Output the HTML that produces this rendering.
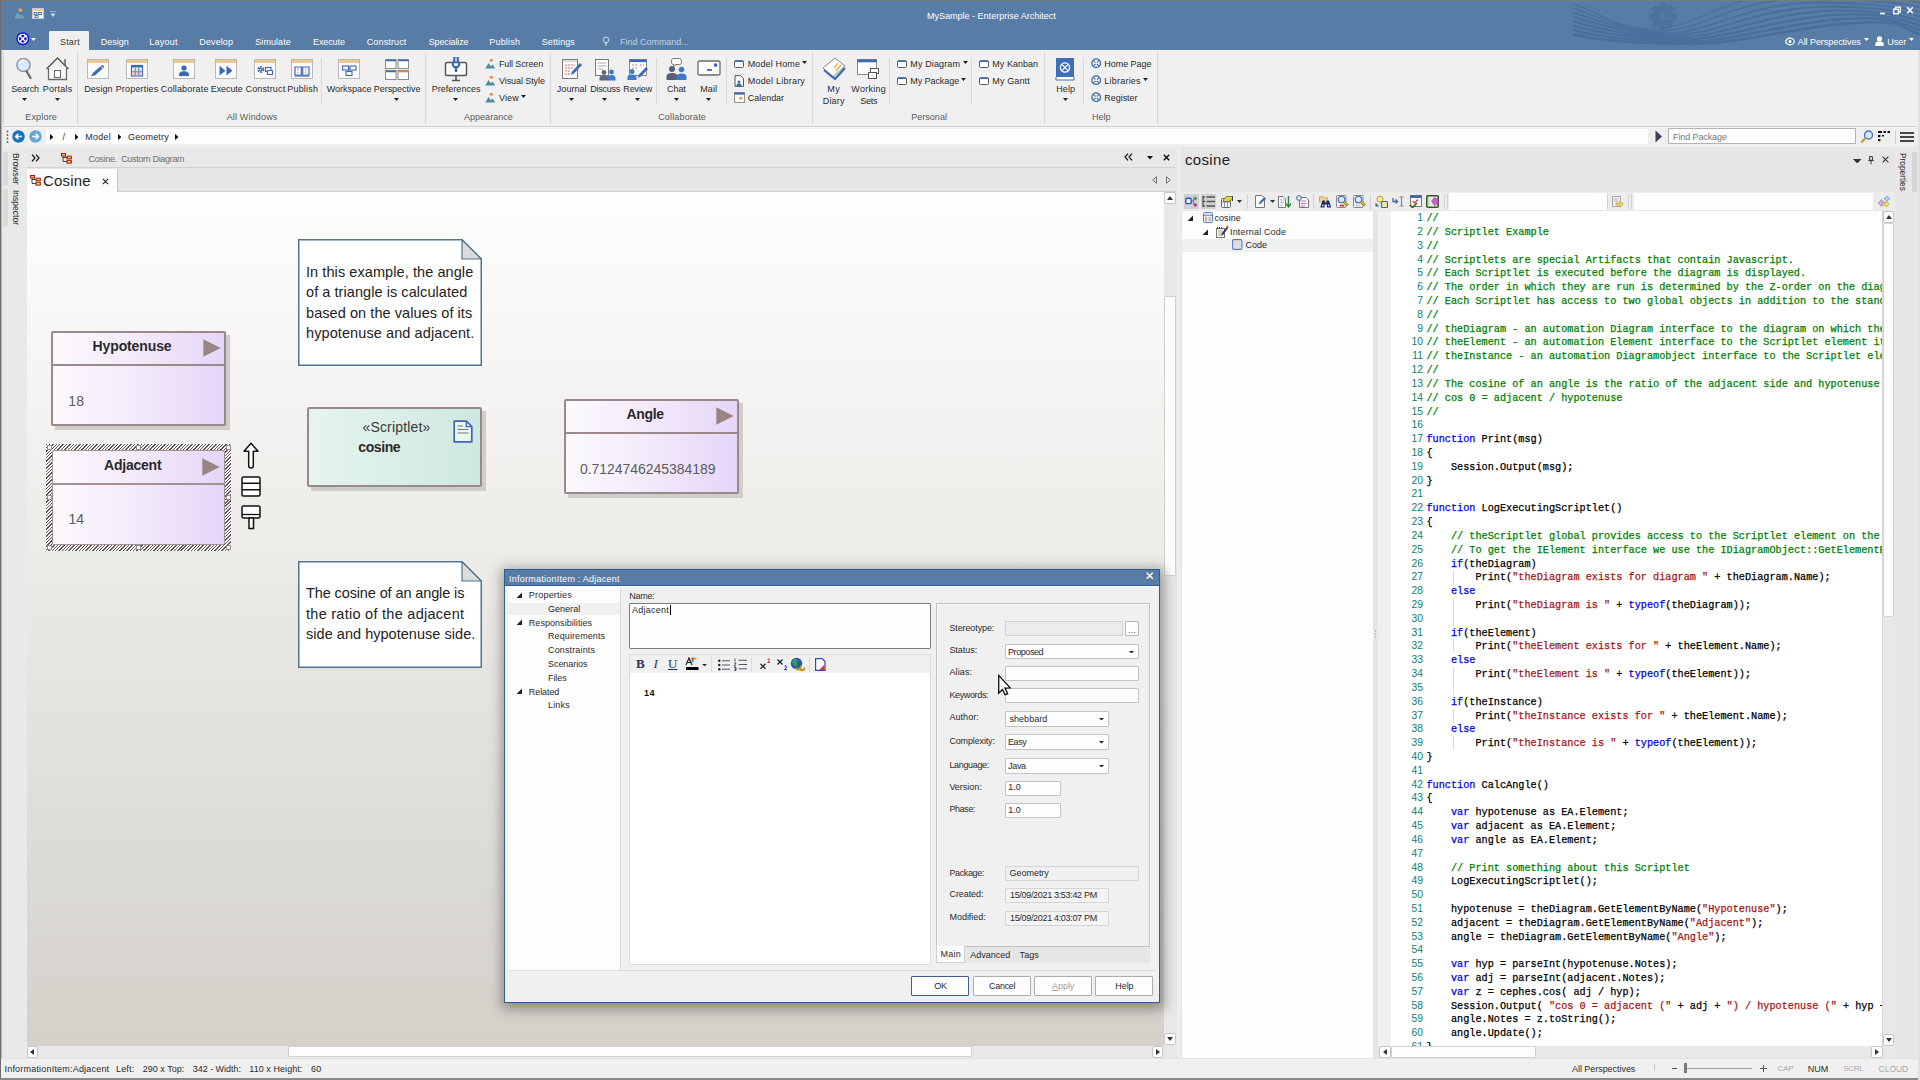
<!DOCTYPE html>
<html lang="en"><head><meta charset="utf-8"><title>MySample - Enterprise Architect</title><style>
html,body{margin:0;padding:0;}
body{width:1920px;height:1080px;position:relative;overflow:hidden;background:#f0f0f0;font-family:"Liberation Sans",sans-serif;font-size:9px;color:#2b2b2b;}
.a{position:absolute;display:block;}
.t{white-space:pre;}
.cd{font-family:"Liberation Mono",monospace;font-size:10.21px;line-height:14px;white-space:pre;color:#000;-webkit-text-stroke:0.25px;}
.ln{font-family:"Liberation Sans",sans-serif;font-size:10.3px;line-height:14px;color:#0a7f72;white-space:pre;}
.cm{color:#008000;}.kw{color:#0000e6;}.st{color:#a31515;}
</style></head>
<body>
<!-- p1_top -->
<div class="a" style="left:0px;top:0px;width:1920px;height:1080px;background:#f0f0f0;"></div>
<div class="a" style="left:0px;top:0px;width:1920px;height:50px;background:#577ca6;"></div>
<svg class="a" style="left:1572px;top:1px;overflow:hidden;" width="348" height="49" viewBox="0 0 348 49"><g transform="translate(91,15.500)" fill="#4b709d" opacity="0.8"><circle r="10.500"/><rect x="-3" y="-13.500" width="6" height="6" rx="1" transform="rotate(0)"/><rect x="-3" y="-13.500" width="6" height="6" rx="1" transform="rotate(45)"/><rect x="-3" y="-13.500" width="6" height="6" rx="1" transform="rotate(90)"/><rect x="-3" y="-13.500" width="6" height="6" rx="1" transform="rotate(135)"/><rect x="-3" y="-13.500" width="6" height="6" rx="1" transform="rotate(180)"/><rect x="-3" y="-13.500" width="6" height="6" rx="1" transform="rotate(225)"/><rect x="-3" y="-13.500" width="6" height="6" rx="1" transform="rotate(270)"/><rect x="-3" y="-13.500" width="6" height="6" rx="1" transform="rotate(315)"/></g><circle cx="93" cy="14.500" r="5.500" fill="#52789f"/><circle cx="95" cy="13.500" r="2.800" fill="#4b709d"/><path d="M1 3.0 C 30 12.0, 45.0 28.0, 80.0 28.0 C 125.0 28.0, 145.0 -4.0, 215.0 -6.0 C 250.0 -7.0, 330 -4.0, 348 2.0" fill="none" stroke="#486c99" stroke-width="1.20" opacity="0.85"/><path d="M1 7.3 C 30 16.3, 51.5 30.1, 86.5 30.1 C 131.5 30.1, 157.0 -0.1, 227.0 -2.1 C 262.0 -3.1, 330 0.5, 348 6.5" fill="none" stroke="#486c99" stroke-width="1.40" opacity="0.85"/><path d="M1 11.6 C 30 20.6, 58.0 32.2, 93.0 32.2 C 138.0 32.2, 169.0 3.8, 239.0 1.8 C 274.0 0.8, 330 5.0, 348 11.0" fill="none" stroke="#486c99" stroke-width="1.60" opacity="0.85"/><path d="M1 15.9 C 30 24.9, 64.5 34.3, 99.5 34.3 C 144.5 34.3, 181.0 7.7, 251.0 5.7 C 286.0 4.7, 330 9.5, 348 15.5" fill="none" stroke="#486c99" stroke-width="1.80" opacity="0.85"/><path d="M1 20.2 C 30 29.2, 71.0 36.4, 106.0 36.4 C 151.0 36.4, 193.0 11.6, 263.0 9.6 C 298.0 8.6, 330 14.0, 348 20.0" fill="none" stroke="#486c99" stroke-width="2.00" opacity="0.85"/><path d="M1 24.5 C 30 33.5, 77.5 38.5, 112.5 38.5 C 157.5 38.5, 205.0 15.5, 275.0 13.5 C 310.0 12.5, 330 18.5, 348 24.5" fill="none" stroke="#486c99" stroke-width="2.20" opacity="0.85"/><path d="M1 28.8 C 30 37.8, 84.0 40.6, 119.0 40.6 C 164.0 40.6, 217.0 19.4, 287.0 17.4 C 322.0 16.4, 330 23.0, 348 29.0" fill="none" stroke="#486c99" stroke-width="2.40" opacity="0.85"/><path d="M1 33.1 C 30 42.1, 90.5 42.7, 125.5 42.7 C 170.5 42.7, 229.0 23.3, 299.0 21.3 C 334.0 20.3, 330 27.5, 348 33.5" fill="none" stroke="#486c99" stroke-width="2.60" opacity="0.85"/></svg>
<div class="a" style="left:0px;top:0px;width:1920px;height:1px;background:#7c7a78;"></div>
<div class="a" style="left:0px;top:0px;width:1px;height:1080px;background:#6f6f6f;"></div>
<div class="a" style="left:1px;top:50px;width:1px;height:1030px;background:#b4b4b4;"></div>
<div class="a" style="left:2px;top:50px;width:1px;height:1030px;background:#e6e6e6;"></div>
<svg class="a" style="left:14px;top:6px;" width="12" height="13" viewBox="0 0 12 13"><path d="M0 12.500L3.800 6.500L6.200 10L7.800 8L10.500 12.500Z" fill="#6ba6b2"/><circle cx="6.400" cy="4.200" r="1.900" fill="#f3934a"/></svg>
<svg class="a" style="left:32px;top:8px;" width="12" height="11" viewBox="0 0 12 11"><rect x="0.5" y="0.5" width="11" height="10" fill="#f4f4f4" stroke="#c9c9c9"/><rect x="1" y="1" width="10" height="2" fill="#e9c98d"/><rect x="2" y="4.5" width="3" height="2" fill="none" stroke="#3a62b0" stroke-width=".8"/><rect x="6.5" y="4.5" width="3" height="2" fill="none" stroke="#3a62b0" stroke-width=".8"/><rect x="3" y="7.5" width="3" height="2" fill="none" stroke="#3a62b0" stroke-width=".8"/></svg>
<svg class="a" style="left:50px;top:11px;" width="6" height="7" viewBox="0 0 6 7"><path d="M0 0H6" stroke="#d5dde8" stroke-width="1"/><path d="M0.5 2.5H5.5L3 6Z" fill="#d5dde8"/></svg>
<span class="a t" id="t1" style="top:9.00px;font-size:9px;line-height:14px;color:#ffffff;left:927px;letter-spacing:0.008px;">MySample - Enterprise Architect</span>
<svg class="a" style="left:1879px;top:6px;" width="36" height="10" viewBox="0 0 36 10"><path d="M1 7.5H6" stroke="#fff" stroke-width="1.6"/><rect x="14.7" y="3.2" width="4.6" height="4.6" fill="none" stroke="#fff" stroke-width="1.3"/><path d="M16.5 3V1.2H21.3V6H19.5" fill="none" stroke="#fff" stroke-width="1.3"/><path d="M28.2 1.2L33.8 7.2M33.8 1.2L28.2 7.2" stroke="#fff" stroke-width="1.5"/></svg>
<svg class="a" style="left:15.5px;top:32px;" width="13.5" height="13.5" viewBox="0 0 13.5 13.5"><circle cx="6.750" cy="6.750" r="6.500" fill="#1212e6"/><circle cx="6.750" cy="6.750" r="4.300" fill="#1212e6" stroke="#fff" stroke-width="1.400"/><path d="M3.300 3.300L10.200 10.200M10.200 3.300L3.300 10.200" stroke="#fff" stroke-width="1.500"/><circle cx="6.750" cy="3.900" r="1.150" fill="#1212e6"/><circle cx="6.750" cy="9.600" r="1.150" fill="#1212e6"/><circle cx="3.900" cy="6.750" r="1.150" fill="#1212e6"/><circle cx="9.600" cy="6.750" r="1.150" fill="#1212e6"/></svg>
<svg class="a" style="left:31px;top:37.5px;" width="5" height="3" viewBox="0 0 5 3"><path d="M0 0H5L2.5 3Z" fill="#f0f4fa"/></svg>
<div class="a" style="left:49px;top:31px;width:40px;height:20px;background:#f0f0f0;border-radius:1px 1px 0 0;"></div>
<span class="a t" id="t2" style="top:34.80px;font-size:9px;line-height:14px;color:#3a3a3a;left:60px;letter-spacing:0.159px;">Start</span>
<span class="a t" id="t3" style="top:34.80px;font-size:9px;line-height:14px;color:#ffffff;left:100.7px;letter-spacing:0.016px;">Design</span>
<span class="a t" id="t4" style="top:34.80px;font-size:9px;line-height:14px;color:#ffffff;left:149.3px;letter-spacing:0.246px;">Layout</span>
<span class="a t" id="t5" style="top:34.80px;font-size:9px;line-height:14px;color:#ffffff;left:199.3px;letter-spacing:0.111px;">Develop</span>
<span class="a t" id="t6" style="top:34.80px;font-size:9px;line-height:14px;color:#ffffff;left:255.3px;letter-spacing:0.062px;">Simulate</span>
<span class="a t" id="t7" style="top:34.80px;font-size:9px;line-height:14px;color:#ffffff;left:313px;letter-spacing:-0.103px;">Execute</span>
<span class="a t" id="t8" style="top:34.80px;font-size:9px;line-height:14px;color:#ffffff;left:366.7px;letter-spacing:0.144px;">Construct</span>
<span class="a t" id="t9" style="top:34.80px;font-size:9px;line-height:14px;color:#ffffff;left:428.7px;letter-spacing:-0.122px;">Specialize</span>
<span class="a t" id="t10" style="top:34.80px;font-size:9px;line-height:14px;color:#ffffff;left:489.3px;letter-spacing:0.183px;">Publish</span>
<span class="a t" id="t11" style="top:34.80px;font-size:9px;line-height:14px;color:#ffffff;left:541.8px;letter-spacing:0.072px;">Settings</span>
<svg class="a" style="left:602px;top:36px;" width="8" height="11" viewBox="0 0 8 11"><circle cx="4" cy="3.8" r="2.8" fill="none" stroke="#d0dae8" stroke-width="1"/><path d="M2.8 7.5H5.2M3 9.2H5" stroke="#d0dae8" stroke-width="1"/></svg>
<span class="a t" id="t12" style="top:34.80px;font-size:9px;line-height:14px;color:#c3d0e2;left:620px;letter-spacing:-0.015px;">Find Command...</span>
<svg class="a" style="left:1785px;top:37px;" width="10" height="9" viewBox="0 0 10 9"><ellipse cx="5" cy="4.5" rx="4.3" ry="3.3" fill="none" stroke="#fff" stroke-width="1.2"/><circle cx="5" cy="4.5" r="1.5" fill="#fff"/></svg>
<span class="a t" id="t13" style="top:34.80px;font-size:9px;line-height:14px;color:#ffffff;left:1797.7px;letter-spacing:-0.058px;">All Perspectives</span>
<svg class="a" style="left:1864px;top:38px;" width="5" height="3" viewBox="0 0 5 3"><path d="M0 0H5L2.5 3Z" fill="#fff"/></svg>
<svg class="a" style="left:1875px;top:36px;" width="9" height="10" viewBox="0 0 9 10"><circle cx="4.5" cy="2.8" r="2.6" fill="#fff"/><path d="M0.3 10V8C0.3 6 2 5.2 4.5 5.2S8.7 6 8.7 8V10Z" fill="#fff"/></svg>
<span class="a t" id="t14" style="top:34.80px;font-size:9px;line-height:14px;color:#ffffff;left:1887.3px;letter-spacing:-0.051px;">User</span>
<svg class="a" style="left:1909px;top:38px;" width="5" height="3" viewBox="0 0 5 3"><path d="M0 0H5L2.5 3Z" fill="#fff"/></svg>
<!-- p2_ribbon -->
<div class="a" style="left:3px;top:50px;width:1914px;height:76px;background:#f0f0f0;"></div>
<div class="a" style="left:3px;top:126px;width:1914px;height:1px;background:#d0d0d0;"></div>
<div class="a" style="left:3px;top:127px;width:1914px;height:1px;background:#f4f4f4;"></div>
<div class="a" style="left:77px;top:53px;width:1px;height:70px;background:#d4d4d4;"></div>
<div class="a" style="left:425px;top:53px;width:1px;height:70px;background:#d4d4d4;"></div>
<div class="a" style="left:550px;top:53px;width:1px;height:70px;background:#d4d4d4;"></div>
<div class="a" style="left:812px;top:53px;width:1px;height:70px;background:#d4d4d4;"></div>
<div class="a" style="left:1044px;top:53px;width:1px;height:70px;background:#d4d4d4;"></div>
<div class="a" style="left:1157px;top:53px;width:1px;height:70px;background:#d4d4d4;"></div>
<div class="a" style="left:3px;top:52px;width:1px;height:72px;background:#d4d4d4;"></div>
<div class="a" style="left:321px;top:58px;width:1px;height:47px;background:#d9d9d9;"></div>
<div class="a" style="left:656px;top:58px;width:1px;height:47px;background:#d9d9d9;"></div>
<div class="a" style="left:726px;top:58px;width:1px;height:47px;background:#d9d9d9;"></div>
<div class="a" style="left:889px;top:58px;width:1px;height:47px;background:#d9d9d9;"></div>
<div class="a" style="left:971px;top:58px;width:1px;height:47px;background:#d9d9d9;"></div>
<div class="a" style="left:1083px;top:58px;width:1px;height:47px;background:#d9d9d9;"></div>
<span class="a t" id="t15" style="top:109.70px;font-size:9px;line-height:14px;color:#5a5a5a;left:25.200000000000003px;letter-spacing:0.185px;">Explore</span>
<span class="a t" id="t16" style="top:109.70px;font-size:9px;line-height:14px;color:#5a5a5a;left:226.7px;letter-spacing:0.163px;">All Windows</span>
<span class="a t" id="t17" style="top:109.70px;font-size:9px;line-height:14px;color:#5a5a5a;left:464.0px;letter-spacing:0.026px;">Appearance</span>
<span class="a t" id="t18" style="top:109.70px;font-size:9px;line-height:14px;color:#5a5a5a;left:658.2px;letter-spacing:0.162px;">Collaborate</span>
<span class="a t" id="t19" style="top:109.70px;font-size:9px;line-height:14px;color:#5a5a5a;left:911.2px;letter-spacing:0.035px;">Personal</span>
<span class="a t" id="t20" style="top:109.70px;font-size:9px;line-height:14px;color:#5a5a5a;left:1091.9px;letter-spacing:0.074px;">Help</span>
<span class="a t" id="t21" style="top:82.00px;font-size:9px;line-height:14px;color:#2b2b2b;left:11.2px;letter-spacing:-0.120px;">Search</span>
<svg class="a" style="left:22px;top:98px;" width="5" height="3" viewBox="0 0 5 3"><path d="M0 0H5L2.5 3Z" fill="#222"/></svg>
<span class="a t" id="t22" style="top:82.00px;font-size:9px;line-height:14px;color:#2b2b2b;left:42.8px;letter-spacing:0.256px;">Portals</span>
<svg class="a" style="left:55px;top:98px;" width="5" height="3" viewBox="0 0 5 3"><path d="M0 0H5L2.5 3Z" fill="#222"/></svg>
<span class="a t" id="t23" style="top:82.00px;font-size:9px;line-height:14px;color:#2b2b2b;left:84.25px;letter-spacing:0.049px;">Design</span>
<span class="a t" id="t24" style="top:82.00px;font-size:9px;line-height:14px;color:#2b2b2b;left:115.69999999999999px;letter-spacing:0.178px;">Properties</span>
<span class="a t" id="t25" style="top:82.00px;font-size:9px;line-height:14px;color:#2b2b2b;left:160.8px;letter-spacing:0.162px;">Collaborate</span>
<span class="a t" id="t26" style="top:82.00px;font-size:9px;line-height:14px;color:#2b2b2b;left:210.8px;letter-spacing:-0.103px;">Execute</span>
<span class="a t" id="t27" style="top:82.00px;font-size:9px;line-height:14px;color:#2b2b2b;left:245.5px;letter-spacing:0.144px;">Construct</span>
<span class="a t" id="t28" style="top:82.00px;font-size:9px;line-height:14px;color:#2b2b2b;left:287.3px;letter-spacing:0.183px;">Publish</span>
<span class="a t" id="t29" style="top:82.00px;font-size:9px;line-height:14px;color:#2b2b2b;left:326.7px;letter-spacing:-0.005px;">Workspace</span>
<span class="a t" id="t30" style="top:82.00px;font-size:9px;line-height:14px;color:#2b2b2b;left:373.7px;letter-spacing:-0.020px;">Perspective</span>
<svg class="a" style="left:394px;top:98px;" width="5" height="3" viewBox="0 0 5 3"><path d="M0 0H5L2.5 3Z" fill="#222"/></svg>
<span class="a t" id="t31" style="top:82.00px;font-size:9px;line-height:14px;color:#2b2b2b;left:431.7px;letter-spacing:0.025px;">Preferences</span>
<svg class="a" style="left:453px;top:98px;" width="5" height="3" viewBox="0 0 5 3"><path d="M0 0H5L2.5 3Z" fill="#222"/></svg>
<span class="a t" id="t32" style="top:82.00px;font-size:9px;line-height:14px;color:#2b2b2b;left:556.8px;letter-spacing:0.040px;">Journal</span>
<svg class="a" style="left:569px;top:98px;" width="5" height="3" viewBox="0 0 5 3"><path d="M0 0H5L2.5 3Z" fill="#222"/></svg>
<span class="a t" id="t33" style="top:82.00px;font-size:9px;line-height:14px;color:#2b2b2b;left:590.2px;letter-spacing:-0.244px;">Discuss</span>
<svg class="a" style="left:602px;top:98px;" width="5" height="3" viewBox="0 0 5 3"><path d="M0 0H5L2.5 3Z" fill="#222"/></svg>
<span class="a t" id="t34" style="top:82.00px;font-size:9px;line-height:14px;color:#2b2b2b;left:623.3px;letter-spacing:-0.118px;">Review</span>
<svg class="a" style="left:635px;top:98px;" width="5" height="3" viewBox="0 0 5 3"><path d="M0 0H5L2.5 3Z" fill="#222"/></svg>
<span class="a t" id="t35" style="top:82.00px;font-size:9px;line-height:14px;color:#2b2b2b;left:667.0px;letter-spacing:-0.051px;">Chat</span>
<svg class="a" style="left:674px;top:98px;" width="5" height="3" viewBox="0 0 5 3"><path d="M0 0H5L2.5 3Z" fill="#222"/></svg>
<span class="a t" id="t36" style="top:82.00px;font-size:9px;line-height:14px;color:#2b2b2b;left:700.3px;letter-spacing:0.074px;">Mail</span>
<svg class="a" style="left:706px;top:98px;" width="5" height="3" viewBox="0 0 5 3"><path d="M0 0H5L2.5 3Z" fill="#222"/></svg>
<span class="a t" id="t37" style="top:82.00px;font-size:9px;line-height:14px;color:#2b2b2b;left:1056.3px;letter-spacing:0.074px;">Help</span>
<svg class="a" style="left:1063px;top:98px;" width="5" height="3" viewBox="0 0 5 3"><path d="M0 0H5L2.5 3Z" fill="#222"/></svg>
<span class="a t" id="t38" style="top:82.00px;font-size:9px;line-height:14px;color:#2b2b2b;left:824.3px;letter-spacing:0.405px;margin-left:3px;">My</span>
<span class="a t" id="t39" style="top:93.90px;font-size:9px;line-height:14px;color:#2b2b2b;left:822.8px;letter-spacing:0.159px;">Diary</span>
<span class="a t" id="t40" style="top:82.00px;font-size:9px;line-height:14px;color:#2b2b2b;left:851.3px;letter-spacing:0.279px;">Working</span>
<span class="a t" id="t41" style="top:93.90px;font-size:9px;line-height:14px;color:#2b2b2b;left:860.3px;letter-spacing:-0.301px;">Sets</span>
<svg class="a" style="left:15px;top:56px;" width="20" height="24" viewBox="0 0 20 24"><circle cx="8.5" cy="9" r="6.6" fill="#dbe9f8" stroke="#8d9aa8" stroke-width="1.5"/><path d="M4.5 7.5A4.5 4.5 0 0 1 9 4.2" stroke="#fff" stroke-width="1.6" fill="none"/><path d="M11.5 15L15.5 22" stroke="#6e6e6e" stroke-width="2.4" stroke-linecap="round"/></svg>
<svg class="a" style="left:45px;top:56px;" width="25" height="25" viewBox="0 0 25 25"><path d="M1.5 13L12.5 2L23.5 13" fill="none" stroke="#555" stroke-width="1.4"/><path d="M20 9V3" stroke="#555" stroke-width="1.4"/><path d="M3.5 11.5V23.5H21.5V11.5" fill="#fbfbfb" stroke="#6a6a6a" stroke-width="1.3"/><rect x="9.5" y="14.5" width="6" height="7" fill="#fff" stroke="#6a6a6a" stroke-width="1.1"/></svg>
<svg class="a" style="left:87px;top:59px;" width="22" height="20" viewBox="0 0 22 20"><rect x="0.5" y="0.5" width="21" height="19" fill="#fbfbfb" stroke="#b9b9b9"/><rect x="1" y="1" width="20" height="3" fill="#ecc98c"/><path d="M6.500 15.500L14.500 8.500" stroke="#3c68b4" stroke-width="3"/><path d="M4.300 17.500L5.200 14.600L7.300 16.600Z" fill="#3c68b4"/><path d="M15 8L16.300 6.800" stroke="#3c68b4" stroke-width="3"/></svg>
<svg class="a" style="left:125.69999999999999px;top:59px;" width="22" height="20" viewBox="0 0 22 20"><rect x="0.5" y="0.5" width="21" height="19" fill="#fbfbfb" stroke="#b9b9b9"/><rect x="1" y="1" width="20" height="3" fill="#ecc98c"/><rect x="5.500" y="6.500" width="11" height="10.500" fill="#fff" stroke="#3c68b4" stroke-width="1.200"/><rect x="5.500" y="6.500" width="11" height="2" fill="#3c68b4"/><rect x="6.500" y="9.500" width="9" height="3" fill="#cfe6cf"/><rect x="6.500" y="13" width="9" height="3.400" fill="#f0c8c0"/><path d="M5.500 12.700H16.500M9.300 8.500V17M12.800 8.500V17" stroke="#3c68b4" stroke-width=".7"/></svg>
<svg class="a" style="left:173.3px;top:59px;" width="22" height="20" viewBox="0 0 22 20"><rect x="0.5" y="0.5" width="21" height="19" fill="#fbfbfb" stroke="#b9b9b9"/><rect x="1" y="1" width="20" height="3" fill="#ecc98c"/><circle cx="11" cy="9" r="2.6" fill="#3c68b4"/><path d="M6 17V15.5C6 13 8 12.3 11 12.3S16 13 16 15.5V17Z" fill="#3c68b4"/></svg>
<svg class="a" style="left:215.3px;top:59px;" width="22" height="20" viewBox="0 0 22 20"><rect x="0.5" y="0.5" width="21" height="19" fill="#fbfbfb" stroke="#b9b9b9"/><rect x="1" y="1" width="20" height="3" fill="#ecc98c"/><path d="M4.500 6.800L10.500 11.700L4.500 16.600ZM11.500 6.800L17.500 11.700L11.500 16.600Z" fill="#3c68b4"/></svg>
<svg class="a" style="left:254px;top:59px;" width="22" height="20" viewBox="0 0 22 20"><rect x="0.5" y="0.5" width="21" height="19" fill="#fbfbfb" stroke="#b9b9b9"/><rect x="1" y="1" width="20" height="3" fill="#ecc98c"/><circle cx="6.800" cy="10.500" r="2.200" fill="none" stroke="#3c68b4" stroke-width="2.600" stroke-dasharray="1.300 0.900"/><circle cx="6.800" cy="10.500" r="1.700" fill="#3c68b4"/><circle cx="6.800" cy="10.500" r="0.800" fill="#fff"/><rect x="11.500" y="8.500" width="5.500" height="4" fill="#fff" stroke="#3c68b4" stroke-width="1.100"/><rect x="13.500" y="11.500" width="5" height="4" fill="#fff" stroke="#3c68b4" stroke-width="1.100"/></svg>
<svg class="a" style="left:291.3px;top:59px;" width="22" height="20" viewBox="0 0 22 20"><rect x="0.5" y="0.5" width="21" height="19" fill="#fbfbfb" stroke="#b9b9b9"/><rect x="1" y="1" width="20" height="3" fill="#ecc98c"/><path d="M4 8H10.300V16H4ZM11.700 8H18V16H11.700Z" fill="#fff" stroke="#3c68b4" stroke-width="1.200"/><path d="M3.500 17H18.500" stroke="#3c68b4" stroke-width="1.200"/><path d="M7 9.500V11M7 12.500V14" stroke="#d55" stroke-width="1"/><path d="M14.800 9.500V11M14.800 12.500V14" stroke="#59c" stroke-width="1"/></svg>
<svg class="a" style="left:337.7px;top:59px;" width="22" height="20" viewBox="0 0 22 20"><rect x="0.5" y="0.5" width="21" height="19" fill="#fbfbfb" stroke="#b9b9b9"/><rect x="1" y="1" width="20" height="3" fill="#ecc98c"/><rect x="4.5" y="7" width="6" height="4" fill="none" stroke="#3c68b4" stroke-width="1.1"/><rect x="12" y="7" width="6" height="4" fill="none" stroke="#3c68b4" stroke-width="1.1"/><rect x="8" y="12.5" width="6" height="4" fill="none" stroke="#3c68b4" stroke-width="1.1"/><path d="M10.5 9H12M11 11V12.5" stroke="#3c68b4" stroke-width="1"/></svg>
<svg class="a" style="left:385px;top:59px;" width="24" height="21" viewBox="0 0 24 21"><rect x="0.5" y="0.5" width="10.5" height="9" fill="#fdfdfd" stroke="#8a8a8a"/><rect x="13" y="0.5" width="10.5" height="9" fill="#fdfdfd" stroke="#8a8a8a"/><rect x="0.5" y="11.5" width="10.5" height="9" fill="#fdfdfd" stroke="#8a8a8a"/><rect x="13" y="11.5" width="10.5" height="9" fill="#fdfdfd" stroke="#8a8a8a"/><path d="M1 1.5H11M13.5 1.5H23.5M1 12.5H11" stroke="#3c68b4" stroke-width="1.6"/><path d="M13.5 12.5H23.5" stroke="#e7863c" stroke-width="1.6"/></svg>
<svg class="a" style="left:444px;top:56px;" width="24" height="26" viewBox="0 0 24 26"><rect x="1.5" y="6.5" width="21" height="13" rx="1.5" fill="#fdfdfd" stroke="#555" stroke-width="1.5"/><path d="M8 24.5H16M12 20V24" stroke="#555" stroke-width="1.6"/><path d="M10.3 1V5.5A3.2 3.2 0 1 0 13.7 5.5V1" fill="none" stroke="#3c68b4" stroke-width="2.2"/><path d="M12 10V16" stroke="#3c68b4" stroke-width="2.4"/></svg>
<svg class="a" style="left:485px;top:58.099999999999994px;" width="11" height="11" viewBox="0 0 11 11"><path d="M0.300 10.500L3.600 5L5.800 8.300L7.600 6.400L10.300 10.500Z" fill="#4a8ea0"/><circle cx="6.300" cy="2.300" r="1.500" fill="#e8843c"/></svg>
<span class="a t" id="t42" style="top:57.10px;font-size:9px;line-height:14px;color:#2b2b2b;left:499px;letter-spacing:-0.129px;">Full Screen</span>
<svg class="a" style="left:485px;top:74.7px;" width="11" height="11" viewBox="0 0 11 11"><path d="M0.300 10.500L3.600 5L5.800 8.300L7.600 6.400L10.300 10.500Z" fill="#4a8ea0"/><circle cx="6.300" cy="2.300" r="1.500" fill="#e8843c"/></svg>
<span class="a t" id="t43" style="top:73.70px;font-size:9px;line-height:14px;color:#2b2b2b;left:499px;letter-spacing:-0.087px;">Visual Style</span>
<svg class="a" style="left:485px;top:91.7px;" width="11" height="11" viewBox="0 0 11 11"><path d="M0.300 10.500L3.600 5L5.800 8.300L7.600 6.400L10.300 10.500Z" fill="#4a8ea0"/><circle cx="6.300" cy="2.300" r="1.500" fill="#e8843c"/></svg>
<span class="a t" id="t44" style="top:90.70px;font-size:9px;line-height:14px;color:#2b2b2b;left:499px;letter-spacing:0.113px;">View</span>
<svg class="a" style="left:521px;top:95px;" width="5" height="3" viewBox="0 0 5 3"><path d="M0 0H5L2.5 3Z" fill="#222"/></svg>
<svg class="a" style="left:561px;top:57px;" width="22" height="24" viewBox="0 0 22 24"><rect x="1.5" y="2.5" width="15" height="19" fill="#fdfdfd" stroke="#7a7a7a"/><rect x="2" y="3" width="14" height="2.4" fill="#dcdcdc"/><path d="M4 8H14M4 11H12M4 14H10M4 17H9" stroke="#c55" stroke-width=".9" stroke-dasharray="2 1"/><path d="M10 18L11 14.5L19 6L21 8L13 16.5Z" fill="#3c68b4"/></svg>
<svg class="a" style="left:594px;top:57px;" width="23" height="24" viewBox="0 0 23 24"><rect x="1.5" y="2.5" width="13" height="16" fill="#fdfdfd" stroke="#7a7a7a"/><path d="M3.5 6H12.5M3.5 9H12.5M3.5 12H9" stroke="#b9a" stroke-width=".9"/><circle cx="10" cy="15.5" r="2.4" fill="#5a6a86"/><path d="M5.5 23.5V21C5.5 19 7.5 18.3 10 18.3S14.5 19 14.5 21V23.5Z" fill="#5a6a86"/><circle cx="17.5" cy="15" r="2.4" fill="#3f7ac6"/><path d="M13.5 23.5V20.8C13.5 19 15.3 18 17.5 18S21.5 19 21.5 20.8V23.5Z" fill="#3f7ac6"/></svg>
<svg class="a" style="left:626px;top:57px;" width="23" height="24" viewBox="0 0 23 24"><rect x="3.5" y="2.5" width="17" height="16" fill="#fdfdfd" stroke="#8a8a8a"/><rect x="3.5" y="2.5" width="17" height="2.6" fill="#3c68b4"/><path d="M6 8H12M6 11H11M14 8H18" stroke="#c77" stroke-width=".9" stroke-dasharray="2 1"/><circle cx="6" cy="14.5" r="2.5" fill="#3f7ac6"/><path d="M1.5 23V20.3C1.5 18.3 3.5 17.6 6 17.6S10.5 18.3 10.5 20.3V23Z" fill="#3f7ac6"/><path d="M12 21L13 17.5L20 10L22 12L15 19.5Z" fill="#3c68b4"/></svg>
<svg class="a" style="left:665px;top:57px;" width="23" height="24" viewBox="0 0 23 24"><rect x="6.5" y="1.5" width="10" height="6" rx="2" fill="#fdfdfd" stroke="#7a7a7a"/><path d="M9 7.5L8 10L11.5 7.5" fill="#fdfdfd" stroke="#7a7a7a" stroke-width=".8"/><circle cx="7" cy="12" r="3" fill="#56607a"/><path d="M1.5 23V19.5C1.5 17 4 16 7 16S12.5 17 12.5 19.5V23Z" fill="#56607a"/><circle cx="16.5" cy="12.5" r="2.8" fill="#3f7ac6"/><path d="M11.5 23V19.8C11.5 17.5 14 16.5 16.5 16.5S21.5 17.5 21.5 19.8V23Z" fill="#3f7ac6"/></svg>
<svg class="a" style="left:697px;top:60px;" width="24" height="16" viewBox="0 0 24 16"><rect x="1" y="1" width="22" height="14" rx="1.5" fill="#fdfdfd" stroke="#6a6a6a" stroke-width="1.3"/><rect x="10" y="9" width="5" height="1.8" fill="#3c68b4"/><rect x="17" y="3.5" width="3.2" height="3.2" fill="#3c68b4"/></svg>
<svg class="a" style="left:734px;top:59.89999999999999px;" width="10" height="8" viewBox="0 0 10 8"><rect x="0.5" y="0.800" width="9" height="6.700" rx="1" fill="#fdfdfd" stroke="#5a5a5a" stroke-width="1"/><path d="M0.800 1.200H9.200" stroke="#3c68b4" stroke-width="1.500"/></svg>
<span class="a t" id="t45" style="top:57.10px;font-size:9px;line-height:14px;color:#2b2b2b;left:747.7px;letter-spacing:0.138px;">Model Home</span>
<svg class="a" style="left:802px;top:61px;" width="5" height="3" viewBox="0 0 5 3"><path d="M0 0H5L2.5 3Z" fill="#222"/></svg>
<svg class="a" style="left:734px;top:75px;" width="11" height="12" viewBox="0 0 11 12"><path d="M1 0.6H6.5L9.5 3.5V11.4H1Z" fill="#fdfdfd" stroke="#555" stroke-width="1"/><circle cx="5" cy="7" r="1.4" fill="#3c68b4"/><path d="M2.5 11V9.8C2.5 8.8 3.8 8.5 5 8.5S7.5 8.8 7.5 9.8V11Z" fill="#3c68b4"/></svg>
<span class="a t" id="t46" style="top:73.70px;font-size:9px;line-height:14px;color:#2b2b2b;left:747.7px;letter-spacing:0.221px;">Model Library</span>
<svg class="a" style="left:734px;top:92px;" width="11" height="11" viewBox="0 0 11 11"><rect x="0.6" y="0.6" width="9.8" height="9.8" fill="#fdfdfd" stroke="#8a8a8a" stroke-width="1"/><rect x="0.6" y="0.6" width="9.8" height="2" fill="#3c68b4"/><rect x="5.5" y="5" width="2.6" height="2.4" fill="#e7863c"/></svg>
<span class="a t" id="t47" style="top:90.70px;font-size:9px;line-height:14px;color:#2b2b2b;left:747.7px;letter-spacing:-0.015px;">Calendar</span>
<svg class="a" style="left:822px;top:57px;" width="24" height="24" viewBox="0 0 24 24"><path d="M1 11L13 1L23 9L11 20Z" fill="#fdfdfd" stroke="#7a7a7a" stroke-width=".9"/><path d="M2 13L13 22L23 11" fill="none" stroke="#3c68b4" stroke-width="2.2"/><path d="M16 6L12 11M19 8L14 14" stroke="#e7a23c" stroke-width="1.2"/></svg>
<svg class="a" style="left:857px;top:58px;" width="24" height="23" viewBox="0 0 24 23"><rect x="0.5" y="1.5" width="19" height="15" fill="#fdfdfd" stroke="#8a8a8a"/><rect x="0.5" y="1.5" width="19" height="2.8" fill="#3c68b4"/><rect x="13.5" y="10.5" width="8" height="5" fill="#fdfdfd" stroke="#555"/><rect x="11.500" y="14.500" width="8" height="6" fill="#fdfdfd" stroke="#555"/></svg>
<svg class="a" style="left:896.7px;top:59.89999999999999px;" width="10" height="8" viewBox="0 0 10 8"><rect x="0.5" y="0.800" width="9" height="6.700" rx="1" fill="#fdfdfd" stroke="#5a5a5a" stroke-width="1"/><path d="M0.800 1.200H9.200" stroke="#3c68b4" stroke-width="1.500"/></svg>
<span class="a t" id="t48" style="top:57.10px;font-size:9px;line-height:14px;color:#2b2b2b;left:910.3px;letter-spacing:0.129px;">My Diagram</span>
<svg class="a" style="left:963px;top:61px;" width="5" height="3" viewBox="0 0 5 3"><path d="M0 0H5L2.5 3Z" fill="#222"/></svg>
<svg class="a" style="left:896.7px;top:76.5px;" width="10" height="8" viewBox="0 0 10 8"><rect x="0.5" y="0.800" width="9" height="6.700" rx="1" fill="#fdfdfd" stroke="#5a5a5a" stroke-width="1"/><path d="M0.800 1.200H9.200" stroke="#3c68b4" stroke-width="1.500"/></svg>
<span class="a t" id="t49" style="top:73.70px;font-size:9px;line-height:14px;color:#2b2b2b;left:910.3px;letter-spacing:-0.072px;">My Package</span>
<svg class="a" style="left:961px;top:78px;" width="5" height="3" viewBox="0 0 5 3"><path d="M0 0H5L2.5 3Z" fill="#222"/></svg>
<svg class="a" style="left:979px;top:59.89999999999999px;" width="10" height="8" viewBox="0 0 10 8"><rect x="0.5" y="0.800" width="9" height="6.700" rx="1" fill="#fdfdfd" stroke="#5a5a5a" stroke-width="1"/><path d="M0.800 1.200H9.200" stroke="#3c68b4" stroke-width="1.500"/></svg>
<span class="a t" id="t50" style="top:57.10px;font-size:9px;line-height:14px;color:#2b2b2b;left:992.3px;letter-spacing:0.031px;">My Kanban</span>
<svg class="a" style="left:979px;top:76.5px;" width="10" height="8" viewBox="0 0 10 8"><rect x="0.5" y="0.800" width="9" height="6.700" rx="1" fill="#fdfdfd" stroke="#5a5a5a" stroke-width="1"/><path d="M0.800 1.200H9.200" stroke="#3c68b4" stroke-width="1.500"/></svg>
<span class="a t" id="t51" style="top:73.70px;font-size:9px;line-height:14px;color:#2b2b2b;left:992.3px;letter-spacing:0.124px;">My Gantt</span>
<svg class="a" style="left:1055px;top:57px;" width="20" height="24" viewBox="0 0 20 24"><rect x="1" y="1" width="18" height="19" fill="#3f6fb8"/><path d="M1 20V23H19V20" fill="#fdfdfd" stroke="#3f6fb8" stroke-width="1"/><circle cx="10" cy="10.5" r="4.6" fill="none" stroke="#fff" stroke-width="1.3"/><path d="M6.8 7.3L13.2 13.7M13.2 7.3L6.8 13.700" stroke="#fff" stroke-width="1.2"/></svg>
<svg class="a" style="left:1090.7px;top:58.099999999999994px;" width="10.5" height="10.5" viewBox="0 0 10.5 10.5"><circle cx="5.200" cy="5.200" r="4.300" fill="none" stroke="#3f6aa8" stroke-width="1.300"/><path d="M2.300 2.300L8.100 8.100M8.100 2.300L2.300 8.100" stroke="#3f6aa8" stroke-width="1.100"/><circle cx="5.200" cy="5.200" r="1.100" fill="#f0f0f0"/></svg>
<span class="a t" id="t52" style="top:57.10px;font-size:9px;line-height:14px;color:#2b2b2b;left:1104.3px;letter-spacing:-0.036px;">Home Page</span>
<svg class="a" style="left:1090.7px;top:74.7px;" width="10.5" height="10.5" viewBox="0 0 10.5 10.5"><circle cx="5.200" cy="5.200" r="4.300" fill="none" stroke="#3f6aa8" stroke-width="1.300"/><path d="M2.300 2.300L8.100 8.100M8.100 2.300L2.300 8.100" stroke="#3f6aa8" stroke-width="1.100"/><circle cx="5.200" cy="5.200" r="1.100" fill="#f0f0f0"/></svg>
<span class="a t" id="t53" style="top:73.70px;font-size:9px;line-height:14px;color:#2b2b2b;left:1104.3px;letter-spacing:0.222px;">Libraries</span>
<svg class="a" style="left:1143px;top:78px;" width="5" height="3" viewBox="0 0 5 3"><path d="M0 0H5L2.5 3Z" fill="#222"/></svg>
<svg class="a" style="left:1090.7px;top:91.7px;" width="10.5" height="10.5" viewBox="0 0 10.5 10.5"><circle cx="5.200" cy="5.200" r="4.300" fill="none" stroke="#3f6aa8" stroke-width="1.300"/><path d="M2.300 2.300L8.100 8.100M8.100 2.300L2.300 8.100" stroke="#3f6aa8" stroke-width="1.100"/><circle cx="5.200" cy="5.200" r="1.100" fill="#f0f0f0"/></svg>
<span class="a t" id="t54" style="top:90.70px;font-size:9px;line-height:14px;color:#2b2b2b;left:1104.3px;letter-spacing:-0.038px;">Register</span>
<!-- p3_diagram -->
<div class="a" style="left:3px;top:128px;width:1914px;height:18px;background:#efefef;"></div>
<div class="a" style="left:46px;top:129px;width:1602px;height:15px;background:#fdfdfd;"></div>
<svg class="a" style="left:6px;top:130px;" width="3" height="14" viewBox="0 0 3 14"><circle cx="1.5" cy="1.500" r="0.9" fill="#666"/><circle cx="1.5" cy="5" r="0.9" fill="#666"/><circle cx="1.5" cy="8.5" r="0.9" fill="#666"/><circle cx="1.5" cy="12" r="0.9" fill="#666"/></svg>
<svg class="a" style="left:12px;top:130px;" width="13" height="13" viewBox="0 0 13 13"><circle cx="6.5" cy="6.5" r="6.2" fill="#1573b9"/><path d="M9.8 6.5H3.800M6.300 3.800L3.600 6.500L6.300 9.200" fill="none" stroke="#fff" stroke-width="1.5"/></svg>
<svg class="a" style="left:29px;top:130px;" width="13" height="13" viewBox="0 0 13 13"><circle cx="6.5" cy="6.5" r="6.2" fill="#62a7d6"/><path d="M3.2 6.5H9.200M6.700 3.800L9.400 6.500L6.700 9.200" fill="none" stroke="#fff" stroke-width="1.5"/></svg>
<svg class="a" style="left:49.5px;top:134px;" width="3.6" height="6" viewBox="0 0 3.6 6"><path d="M0 0L3.6 3.0L0 6Z" fill="#111"/></svg>
<span class="a t" id="t55" style="top:130.40px;font-size:9px;line-height:14px;color:#2b2b2b;left:62.5px;">/</span>
<svg class="a" style="left:74.5px;top:134px;" width="3.6" height="6" viewBox="0 0 3.6 6"><path d="M0 0L3.6 3.0L0 6Z" fill="#111"/></svg>
<span class="a t" id="t56" style="top:130.40px;font-size:9px;line-height:14px;color:#2b2b2b;left:85.3px;letter-spacing:0.259px;">Model</span>
<svg class="a" style="left:117.5px;top:134px;" width="3.6" height="6" viewBox="0 0 3.6 6"><path d="M0 0L3.6 3.0L0 6Z" fill="#111"/></svg>
<span class="a t" id="t57" style="top:130.40px;font-size:9px;line-height:14px;color:#2b2b2b;left:128px;letter-spacing:0.162px;">Geometry</span>
<svg class="a" style="left:175px;top:134px;" width="3.6" height="6" viewBox="0 0 3.6 6"><path d="M0 0L3.6 3.0L0 6Z" fill="#111"/></svg>
<svg class="a" style="left:1655px;top:130px;" width="8" height="13" viewBox="0 0 8 13"><path d="M0.5 0.5L7 6.5L0.5 12.500Z" fill="#3a3f63"/></svg>
<div class="a" style="left:1668px;top:128px;width:188px;height:16px;background:#fdfdfd;border:1px solid #b4b4b4;box-sizing:border-box;"></div>
<span class="a t" id="t58" style="top:130.20px;font-size:9px;line-height:14px;color:#777;left:1673px;letter-spacing:-0.103px;">Find Package</span>
<svg class="a" style="left:1860px;top:130px;" width="14" height="14" viewBox="0 0 14 14"><circle cx="8.500" cy="5" r="4" fill="#d7e8fa" stroke="#4a6fc0" stroke-width="1.3"/><path d="M5.5 8L1.200 12.600" stroke="#c9953c" stroke-width="2"/></svg>
<svg class="a" style="left:1878px;top:131px;" width="13" height="12" viewBox="0 0 13 12"><path d="M0 1H4M5.500 1H8M9.500 1H12" stroke="#111" stroke-width="2"/><rect x="0" y="4" width="2.400" height="2.200" fill="#111"/><rect x="0" y="8" width="2.400" height="2.200" fill="#111"/><rect x="4" y="4" width="2" height="1.500" fill="#111"/></svg>
<div class="a" style="left:1895px;top:130px;width:1px;height:14px;background:#d0d0d0;"></div>
<svg class="a" style="left:1900px;top:132px;" width="14" height="10" viewBox="0 0 14 10"><path d="M0 1H14M0 5H14M0 9H14" stroke="#111" stroke-width="1.500"/></svg>
<div class="a" style="left:3px;top:147px;width:24px;height:911px;background:#e9e9e9;"></div>
<div class="a" style="left:3px;top:152px;width:5px;height:33px;background:#d9d9d9;"></div>
<div class="a" style="left:3px;top:189px;width:5px;height:37px;background:#d9d9d9;"></div>
<span class="a t" style="left:22px;top:153px;font-size:8.6px;line-height:12px;color:#2b2b2b;transform-origin:0 0;transform:rotate(90deg);">Browser</span>
<span class="a t" style="left:22px;top:190px;font-size:8.5px;line-height:12px;color:#2b2b2b;transform-origin:0 0;transform:rotate(90deg);">Inspector</span>
<div class="a" style="left:27px;top:147px;width:1150px;height:20px;background:#e8e8e8;"></div>
<div class="a" style="left:27px;top:167px;width:1150px;height:1px;background:#d2d2d2;"></div>
<svg class="a" style="left:30.5px;top:154px;" width="9" height="8" viewBox="0 0 9 8"><path d="M1 0.600L4 4L1 7.400M5 0.600L8 4L5 7.400" fill="none" stroke="#111" stroke-width="1.200"/></svg>
<svg class="a" style="left:61px;top:152.5px;" width="11.0" height="11.0" viewBox="0 0 11 11"><path d="M2 1V8.5H6M2 4.500H6" fill="none" stroke="#444" stroke-width="1"/><rect x="0.5" y="0.5" width="4" height="2.5" fill="#f3d24a" stroke="#a01818" stroke-width="1"/><rect x="6" y="3.2" width="4.300" height="2.600" fill="#f3d24a" stroke="#a01818" stroke-width="1"/><rect x="6" y="7.3" width="4.300" height="2.800" fill="#f3d24a" stroke="#a01818" stroke-width="1"/></svg>
<span class="a t" id="t59" style="top:151.50px;font-size:9px;line-height:14px;color:#6e6e6e;left:88.5px;letter-spacing:-0.315px;">Cosine.  Custom Diagram</span>
<svg class="a" style="left:1124px;top:153px;" width="9" height="8" viewBox="0 0 9 8"><path d="M4 0.600L1 4L4 7.400M8 0.600L5 4L8 7.400" fill="none" stroke="#111" stroke-width="1.200"/></svg>
<svg class="a" style="left:1147px;top:156px;" width="6" height="3.5" viewBox="0 0 6 3.5"><path d="M0 0H6L3.0 3.5Z" fill="#111"/></svg>
<svg class="a" style="left:1163px;top:154px;" width="7" height="7" viewBox="0 0 7 7"><path d="M0.800 0.800L6.200 6.200M6.200 0.800L0.800 6.200" stroke="#111" stroke-width="1.500"/></svg>
<div class="a" style="left:27px;top:168px;width:1150px;height:23px;background:#e6e6e6;"></div>
<div class="a" style="left:27px;top:191px;width:1150px;height:1px;background:#d0d0d0;"></div>
<div class="a" style="left:27px;top:169px;width:90px;height:23px;background:#fdfdfd;border-right:1px solid #c8c8c8;box-sizing:content-box;"></div>
<svg class="a" style="left:30px;top:175px;" width="11.0" height="11.0" viewBox="0 0 11 11"><path d="M2 1V8.5H6M2 4.500H6" fill="none" stroke="#444" stroke-width="1"/><rect x="0.5" y="0.5" width="4" height="2.5" fill="#f3d24a" stroke="#a01818" stroke-width="1"/><rect x="6" y="3.2" width="4.300" height="2.600" fill="#f3d24a" stroke="#a01818" stroke-width="1"/><rect x="6" y="7.3" width="4.300" height="2.800" fill="#f3d24a" stroke="#a01818" stroke-width="1"/></svg>
<span class="a t" id="t60" style="top:169.50px;font-size:15px;line-height:22px;color:#222;left:43px;letter-spacing:0.191px;">Cosine</span>
<svg class="a" style="left:102px;top:177.5px;" width="7" height="7" viewBox="0 0 7 7"><path d="M0.800 0.800L6.200 6.200M6.200 0.800L0.800 6.200" stroke="#222" stroke-width="1.100"/></svg>
<svg class="a" style="left:1152px;top:176px;" width="5" height="8" viewBox="0 0 5 8"><path d="M4.500 0.700L0.700 4L4.500 7.300Z" fill="none" stroke="#666" stroke-width=".9"/></svg>
<svg class="a" style="left:1166px;top:176px;" width="5" height="8" viewBox="0 0 5 8"><path d="M0.500 0.700L4.300 4L0.500 7.300Z" fill="none" stroke="#666" stroke-width=".9"/></svg>
<div class="a" style="left:27px;top:192px;width:1137px;height:854px;background:linear-gradient(180deg,#fefefd 0%,#d4d1cb 100%);"></div>
<div class="a" style="left:1164px;top:192px;width:13px;height:854px;background:#e8e8e8;"></div>
<div class="a" style="left:1176.5px;top:192px;width:1px;height:866px;background:#d2d2d2;"></div>
<div class="a" style="left:1164px;top:192px;width:12px;height:12px;background:#fdfdfd;border:1px solid #c6c6c6;box-sizing:border-box;border-radius:2px;"></div>
<svg class="a" style="left:1167px;top:196px;" width="6" height="4" viewBox="0 0 6 4"><path d="M0 4L3 0L6 4Z" fill="#333"/></svg>
<div class="a" style="left:1164px;top:296px;width:12px;height:279.5px;background:#fdfdfd;border:1px solid #d2d2d2;box-sizing:border-box;border-radius:1px;"></div>
<div class="a" style="left:1164px;top:1033px;width:12px;height:12px;background:#fdfdfd;border:1px solid #c6c6c6;box-sizing:border-box;border-radius:2px;"></div>
<svg class="a" style="left:1167px;top:1037px;" width="6" height="4" viewBox="0 0 6 4"><path d="M0 0L3 4L6 0Z" fill="#333"/></svg>
<div class="a" style="left:27px;top:1046px;width:1150px;height:12px;background:#e8e8e8;"></div>
<div class="a" style="left:27px;top:1046px;width:11px;height:12px;background:#fdfdfd;border:1px solid #c6c6c6;box-sizing:border-box;border-radius:2px;"></div>
<svg class="a" style="left:30px;top:1049px;" width="4" height="6" viewBox="0 0 4 6"><path d="M4 0L0 3L4 6Z" fill="#333"/></svg>
<div class="a" style="left:288px;top:1046px;width:684px;height:11px;background:#fdfdfd;border:1px solid #d2d2d2;box-sizing:border-box;border-radius:1px;"></div>
<div class="a" style="left:1152px;top:1046px;width:11px;height:12px;background:#fdfdfd;border:1px solid #c6c6c6;box-sizing:border-box;border-radius:2px;"></div>
<svg class="a" style="left:1156px;top:1049px;" width="4" height="6" viewBox="0 0 4 6"><path d="M0 0L4 3L0 6Z" fill="#333"/></svg>
<div class="a" style="left:1177px;top:147px;width:4px;height:911px;background:#ececec;"></div>
<div class="a" style="left:54.5px;top:335px;width:175px;height:95px;background:#cfcecb;"></div><div class="a" style="left:51px;top:331px;width:175px;height:95px;box-sizing:border-box;border:2px solid #9a898a;border-radius:2px;background:linear-gradient(90deg,#fcf9fe 0%,#f4ebfb 45%,#e5d6f8 100%);"></div><div class="a" style="left:52px;top:363.5px;width:173px;height:2px;background:#9a898a;"></div><span class="a t" id="t61" style="top:336.80px;font-size:14px;line-height:18px;color:#2a2a2a;left:92.6px;font-weight:bold;letter-spacing:-0.127px;">Hypotenuse</span><svg class="a" style="left:203px;top:338.5px;" width="18" height="18" viewBox="0 0 18 18"><path d="M0.3 0.3L17.700 9L0.3 17.700Z" fill="#9a8586"/></svg><span class="a t" id="t62" style="top:391.80px;font-size:14px;line-height:18px;color:#5c5c5c;left:68.3px;letter-spacing:0.091px;">18</span>
<div class="a" style="left:46px;top:444px;width:185px;height:107px;background:repeating-linear-gradient(135deg,#5c5c5c 0,#5c5c5c 1px,#f6f4f2 1px,#f6f4f2 2.400px);"></div>
<div class="a" style="left:52px;top:450px;width:173px;height:94.5px;box-sizing:border-box;border:1px solid #a39293;border-radius:2px;background:linear-gradient(90deg,#fcf9fe 0%,#f4ebfb 45%,#e5d6f8 100%);"></div><div class="a" style="left:53px;top:482.5px;width:171px;height:2px;background:#a39293;"></div><span class="a t" id="t63" style="top:455.80px;font-size:14px;line-height:18px;color:#2a2a2a;left:104.1px;font-weight:bold;letter-spacing:-0.233px;">Adjacent</span><svg class="a" style="left:202px;top:457.5px;" width="18" height="18" viewBox="0 0 18 18"><path d="M0.3 0.3L17.700 9L0.3 17.700Z" fill="#9a8586"/></svg><span class="a t" id="t64" style="top:510.30px;font-size:14px;line-height:18px;color:#5c5c5c;left:68.5px;letter-spacing:0.041px;">14</span>
<div class="a" style="left:46.5px;top:444.5px;width:5px;height:5px;background:#fff;border:1px solid #9a8a8a;box-sizing:border-box;"></div>
<div class="a" style="left:136px;top:444.5px;width:5px;height:5px;background:#fff;border:1px solid #9a8a8a;box-sizing:border-box;"></div>
<div class="a" style="left:225.5px;top:444.5px;width:5px;height:5px;background:#fff;border:1px solid #9a8a8a;box-sizing:border-box;"></div>
<div class="a" style="left:46.5px;top:495px;width:5px;height:5px;background:#fff;border:1px solid #9a8a8a;box-sizing:border-box;"></div>
<div class="a" style="left:225.5px;top:495px;width:5px;height:5px;background:#fff;border:1px solid #9a8a8a;box-sizing:border-box;"></div>
<div class="a" style="left:46.5px;top:545px;width:5px;height:5px;background:#fff;border:1px solid #9a8a8a;box-sizing:border-box;"></div>
<div class="a" style="left:136px;top:545px;width:5px;height:5px;background:#fff;border:1px solid #9a8a8a;box-sizing:border-box;"></div>
<div class="a" style="left:225.5px;top:545px;width:5px;height:5px;background:#fff;border:1px solid #9a8a8a;box-sizing:border-box;"></div>
<svg class="a" style="left:242px;top:442px;" width="18" height="27" viewBox="0 0 18 27"><path d="M9 1.300L2 9.300H6.700V24Q6.700 26 9 26Q11.300 26 11.300 24V9.300H16Z" fill="#fff" stroke="#111" stroke-width="1.500" stroke-linejoin="round"/></svg>
<svg class="a" style="left:241px;top:476px;" width="20" height="21" viewBox="0 0 20 21"><rect x="1" y="1" width="18" height="19" rx="1.500" fill="#fff" stroke="#111" stroke-width="1.500"/><path d="M1 7.300H19M1 13.700H19" stroke="#111" stroke-width="1.500"/></svg>
<svg class="a" style="left:241px;top:505px;" width="20" height="25" viewBox="0 0 20 25"><rect x="1" y="1" width="18" height="12" rx="1.500" fill="#fff" stroke="#111" stroke-width="1.500"/><path d="M1 9.500H19" stroke="#111" stroke-width="1.300"/><rect x="8" y="13" width="4.500" height="10.500" fill="#fff" stroke="#111" stroke-width="1.500"/></svg>
<svg class="a" style="left:298px;top:239px;" width="184" height="127" viewBox="0 0 184 127"><path d="M0.75 0.75H164L183.25 20V126.25H0.75Z" fill="#ffffff" stroke="#4f7590" stroke-width="1.5"/><path d="M164 0.75V20H183.25Z" fill="#dcdcdc" stroke="#4f7590" stroke-width="1.2"/></svg><span class="a t" id="t65" style="top:261.70px;font-size:14.5px;line-height:20px;color:#222;left:306px;letter-spacing:0.079px;">In this example, the angle</span><span class="a t" id="t66" style="top:282.10px;font-size:14.5px;line-height:20px;color:#222;left:306px;letter-spacing:0.063px;">of a triangle is calculated</span><span class="a t" id="t67" style="top:302.50px;font-size:14.5px;line-height:20px;color:#222;left:306px;letter-spacing:0.071px;">based on the values of its</span><span class="a t" id="t68" style="top:322.90px;font-size:14.5px;line-height:20px;color:#222;left:306px;letter-spacing:0.093px;">hypotenuse and adjacent.</span>
<svg class="a" style="left:298px;top:561px;" width="184" height="107" viewBox="0 0 184 107"><path d="M0.75 0.75H164L183.25 20V106.25H0.75Z" fill="#ffffff" stroke="#4f7590" stroke-width="1.5"/><path d="M164 0.75V20H183.25Z" fill="#dcdcdc" stroke="#4f7590" stroke-width="1.2"/></svg><span class="a t" id="t69" style="top:583.30px;font-size:14.5px;line-height:20px;color:#222;left:306px;letter-spacing:-0.117px;">The cosine of an angle is</span><span class="a t" id="t70" style="top:603.50px;font-size:14.5px;line-height:20px;color:#222;left:306px;letter-spacing:0.270px;">the ratio of the adjacent</span><span class="a t" id="t71" style="top:623.70px;font-size:14.5px;line-height:20px;color:#222;left:306px;letter-spacing:0.032px;">side and hypotenuse side.</span>
<div class="a" style="left:311px;top:411px;width:175px;height:79.5px;background:#cfcecb;"></div>
<div class="a" style="left:307px;top:407px;width:175px;height:79.5px;box-sizing:border-box;border:2px solid #9a898a;border-radius:2px;background:linear-gradient(90deg,#e6f4ef 0%,#d9eee7 55%,#cde8e0 100%);"></div>
<span class="a t" id="t72" style="top:417.50px;font-size:14px;line-height:18px;color:#3a3a3a;left:362.5px;letter-spacing:0.164px;">«Scriptlet»</span>
<span class="a t" id="t73" style="top:438.00px;font-size:14px;line-height:18px;color:#2a2a2a;left:358.3px;font-weight:bold;letter-spacing:-0.400px;">cosine</span>
<svg class="a" style="left:453px;top:419.5px;" width="20" height="23" viewBox="0 0 20 23"><path d="M1.200 1.200H13.500L18.800 6.500V21.800H1.200Z" fill="#e9f7f3" stroke="#4063ba" stroke-width="1.700" stroke-linejoin="round"/><path d="M13.300 1.500V6.700H18.500" fill="none" stroke="#4063ba" stroke-width="1.300"/><path d="M4.500 6H10M4.500 9.500H15.500M4.500 13H15.500" stroke="#777" stroke-width="1.200"/></svg>
<div class="a" style="left:567.5px;top:403px;width:175px;height:95px;background:#cfcecb;"></div><div class="a" style="left:564px;top:399px;width:175px;height:95px;box-sizing:border-box;border:2px solid #9a898a;border-radius:2px;background:linear-gradient(90deg,#fcf9fe 0%,#f4ebfb 45%,#e5d6f8 100%);"></div><div class="a" style="left:565px;top:431.5px;width:173px;height:2px;background:#9a898a;"></div><span class="a t" id="t74" style="top:404.80px;font-size:14px;line-height:18px;color:#2a2a2a;left:626.4px;font-weight:bold;letter-spacing:-0.286px;">Angle</span><svg class="a" style="left:716px;top:406.5px;" width="18" height="18" viewBox="0 0 18 18"><path d="M0.3 0.3L17.700 9L0.3 17.700Z" fill="#9a8586"/></svg><span class="a t" id="t75" style="top:459.80px;font-size:14px;line-height:18px;color:#5c5c5c;left:580px;letter-spacing:-0.039px;">0.7124746245384189</span>
<!-- p4_right -->
<div class="a" style="left:1181px;top:147px;width:713px;height:911px;background:#e6e6e6;"></div>
<span class="a t" id="t76" style="top:149.00px;font-size:15px;line-height:22px;color:#222;left:1185px;letter-spacing:0.332px;">cosine</span>
<svg class="a" style="left:1853px;top:158.5px;" width="8.5" height="4.5" viewBox="0 0 8.5 4.5"><path d="M0 0H8.5L4.25 4.5Z" fill="#333"/></svg>
<svg class="a" style="left:1868px;top:156px;" width="6" height="9" viewBox="0 0 6 9"><path d="M1.600 0.600H4.400V4.300H1.600ZM0.300 4.600H5.700M3 4.800V8.200" fill="none" stroke="#333" stroke-width="1"/></svg>
<svg class="a" style="left:1882px;top:156px;" width="7" height="7" viewBox="0 0 7 7"><path d="M0.600 0.600L6.400 6.400M6.400 0.600L0.600 6.400" stroke="#333" stroke-width="1.100"/></svg>
<div class="a" style="left:1181px;top:192px;width:713px;height:18px;background:#ececec;"></div>
<div class="a" style="left:1184px;top:194px;width:15px;height:15px;background:#d0d0d0;"></div>
<div class="a" style="left:1201px;top:194px;width:15px;height:15px;background:#d0d0d0;"></div>
<svg class="a" style="left:1185px;top:194.5px;" width="13" height="13" viewBox="0 0 13 13"><rect x="0.800" y="3.200" width="5.400" height="5.400" rx="1.200" fill="#eef4ff" stroke="#2b4fd0" stroke-width="1.400"/><path d="M6.500 6H8.500V3.500H10M8.500 6V10H10" fill="none" stroke="#777" stroke-width=".9"/><path d="M9.500 1.300L12.500 3.500L9.500 5.700Z" fill="#1e9a4a"/><path d="M9.500 7.800L12.500 10L9.500 12.200Z" fill="#b0207a"/></svg>
<svg class="a" style="left:1202px;top:194.5px;" width="13" height="13" viewBox="0 0 13 13"><path d="M4.500 2H13M4.500 6.500H13M4.500 11H13" stroke="#555" stroke-width="1.300"/><path d="M1 1V12M1 2H3M1 6.500H3M1 11H3" stroke="#333" stroke-width="1"/></svg>
<svg class="a" style="left:1220px;top:194.5px;" width="13" height="13" viewBox="0 0 13 13"><rect x="1.500" y="3.500" width="9" height="9" rx="1" fill="#f7f7f7" stroke="#666"/><path d="M1.500 7H10.500M4.500 7V12.500M7.500 7V12.500" stroke="#6a7ab0" stroke-width=".8"/><path d="M3.500 4.500L7 1.500H12.500V4L9 6.500H3.500Z" fill="#e3d34a" stroke="#6a5e14" stroke-width=".8"/><path d="M12.500 1V6" stroke="#444" stroke-width="1"/></svg>
<svg class="a" style="left:1254px;top:194.5px;" width="13" height="13" viewBox="0 0 13 13"><path d="M1.500 0.500H8L10.500 3V12.500H1.500Z" fill="#fbfbfb" stroke="#777"/><path d="M4.500 9.500L5.500 7L10.500 2L12 3.500L7 8.500Z" fill="#3c68b4"/></svg>
<svg class="a" style="left:1278px;top:194.5px;" width="13" height="13" viewBox="0 0 13 13"><path d="M0.500 1.500H5L7.500 4V12.500H0.500Z" fill="#fbfbfb" stroke="#777"/><path d="M2 5H6M2 7.500H6M2 10H5" stroke="#9ab" stroke-width=".8"/><path d="M10.500 1V11M8 8.500L10.500 12L13 8.500" stroke="#2a8a3c" stroke-width="1.400" fill="none"/></svg>
<svg class="a" style="left:1296px;top:194.5px;" width="13" height="13" viewBox="0 0 13 13"><path d="M3.500 2.500H10L12.500 5V12.500H3.500Z" fill="#fbfbfb" stroke="#777"/><path d="M5 6H10M5 8.500H10M5 11H9" stroke="#c5a" stroke-width=".9"/><circle cx="3" cy="3" r="2.400" fill="#dde9f8" stroke="#3c68b4" stroke-width="1"/></svg>
<svg class="a" style="left:1319px;top:194.5px;" width="13" height="13" viewBox="0 0 13 13"><path d="M0.500 1.500H4L5 2.800H8.500V7H0.500Z" fill="#f2d48a" stroke="#c09a3a" stroke-width=".7"/><path d="M3.500 5.500H6V7.500H7.500V5.500H10L12 11.500V12.500H8V9.500H5.500V12.500H1.500V11.500Z" fill="#1c2a66"/><path d="M3 10.500H4.500M9 10.500H10.500" stroke="#dfe6ff" stroke-width="1.300"/></svg>
<svg class="a" style="left:1336px;top:194.5px;" width="13" height="13" viewBox="0 0 13 13"><rect x="0.500" y="0.500" width="9.500" height="12" rx="1" fill="#f2f2f2" stroke="#8a8a8a"/><circle cx="5.500" cy="4.500" r="3.300" fill="#d6e8fa" stroke="#3c68b4" stroke-width="1.100"/><path d="M8 7L11.800 10.500" stroke="#7a6410" stroke-width="2.600"/><path d="M8 7L11.800 10.500" stroke="#ecc62a" stroke-width="1.500"/><path d="M4 11.500Q6 9 8 11.500" stroke="#d22" stroke-width="1.300" fill="none"/></svg>
<svg class="a" style="left:1353px;top:194.5px;" width="13" height="13" viewBox="0 0 13 13"><rect x="0.500" y="0.500" width="9.500" height="12" rx="1" fill="#f2f2f2" stroke="#8a8a8a"/><path d="M3.500 8V12M6 8V12" stroke="#b8c0e0" stroke-width="1"/><circle cx="5.500" cy="4.500" r="3.300" fill="#d6e8fa" stroke="#3c68b4" stroke-width="1.100"/><path d="M8 7L11.800 10.500" stroke="#7a6410" stroke-width="2.600"/><path d="M8 7L11.800 10.500" stroke="#ecc62a" stroke-width="1.500"/></svg>
<svg class="a" style="left:1375px;top:194.5px;" width="13" height="13" viewBox="0 0 13 13"><circle cx="5" cy="4" r="3" fill="#f8ec9a" stroke="#b09a2a" stroke-width="1"/><rect x="6.500" y="6.500" width="6" height="6" rx="1" fill="#f8ec9a" stroke="#3c68b4" stroke-width="1.200"/><path d="M1 8V11H4M2.500 9.500L1 11.200" stroke="#3c68b4" stroke-width="1.200" fill="none"/></svg>
<svg class="a" style="left:1392px;top:194.5px;" width="13" height="13" viewBox="0 0 13 13"><path d="M1 3V6.500H5M3.500 4.500L5.500 6.500L3.500 8.500" stroke="#3c68b4" stroke-width="1.300" fill="none"/><path d="M9.500 2V11M7.500 2H11.500M7.500 11H11.500" stroke="#888" stroke-width="1.200"/></svg>
<svg class="a" style="left:1409px;top:194.5px;" width="13" height="13" viewBox="0 0 13 13"><rect x="1.500" y="0.500" width="11" height="11" fill="#fbfbfb" stroke="#777"/><rect x="1.500" y="0.500" width="11" height="2.500" fill="#3c68b4"/><path d="M3.500 6L5.500 8L9 4.500" stroke="#d33" stroke-width="1.100" fill="none"/><path d="M1 10L3.500 12.500L8 8" stroke="#2a6a2a" stroke-width="1.700" fill="none"/></svg>
<svg class="a" style="left:1426px;top:194.5px;" width="13" height="13" viewBox="0 0 13 13"><rect x="0.800" y="0.800" width="11.400" height="11.400" rx="1" fill="#eef0e6" stroke="#2f5a22" stroke-width="1.600"/><path d="M2.500 3V10" stroke="#c8d0c0" stroke-width="1.500"/><path d="M5.500 6L8.500 2.500L12 4.500V8.500L8.500 10.500Z" fill="#d05ad8" stroke="#a030a8" stroke-width=".6"/></svg>
<svg class="a" style="left:1237px;top:200px;" width="5" height="3" viewBox="0 0 5 3"><path d="M0 0H5L2.5 3Z" fill="#333"/></svg>
<svg class="a" style="left:1270px;top:200px;" width="5" height="3" viewBox="0 0 5 3"><path d="M0 0H5L2.5 3Z" fill="#333"/></svg>
<div class="a" style="left:1247px;top:194px;width:1px;height:15px;background:#d2d2d2;"></div>
<div class="a" style="left:1313px;top:194px;width:1px;height:15px;background:#d2d2d2;"></div>
<div class="a" style="left:1370px;top:194px;width:1px;height:15px;background:#d2d2d2;"></div>
<div class="a" style="left:1444px;top:194px;width:1px;height:15px;background:#d2d2d2;"></div>
<div class="a" style="left:1447px;top:194px;width:1px;height:15px;background:#d2d2d2;"></div>
<div class="a" style="left:1607px;top:194px;width:1px;height:15px;background:#d2d2d2;"></div>
<div class="a" style="left:1628px;top:194px;width:1px;height:15px;background:#d2d2d2;"></div>
<div class="a" style="left:1631px;top:194px;width:1px;height:15px;background:#d2d2d2;"></div>
<div class="a" style="left:1449px;top:193px;width:158px;height:17px;background:#fdfdfd;"></div>
<svg class="a" style="left:1612px;top:194.5px;" width="13" height="13" viewBox="0 0 13 13"><rect x="0.500" y="1.500" width="8" height="10" fill="#f0f0f0" stroke="#aaa"/><path d="M2 4H6M2 6H6" stroke="#d88" stroke-width=".8"/><path d="M4 8H8V6L11.500 9L8 12V10H4Z" fill="#f3e36a" stroke="#a8962a" stroke-width=".6"/></svg>
<div class="a" style="left:1634px;top:193px;width:239px;height:17px;background:#fdfdfd;"></div>
<svg class="a" style="left:1877px;top:194.5px;" width="13" height="13" viewBox="0 0 13 13"><path d="M1 8L4.500 4.500L8 8L4.500 11.500Z" fill="#d8a8e8" stroke="#a86ac8" stroke-width=".6"/><path d="M7 3.500L10 1L13 3.500L10 6Z" fill="#a8c8f0" stroke="#6a8ac8" stroke-width=".6"/><path d="M5 8H9V6L12.500 9L9 12V10H5Z" fill="#f3e36a" stroke="#a8962a" stroke-width=".6"/></svg>
<div class="a" style="left:1182px;top:211px;width:191px;height:847px;background:#fdfdfd;"></div>
<div class="a" style="left:1182px;top:239px;width:191px;height:12.5px;background:#f0f0f0;"></div>
<svg class="a" style="left:1186.5px;top:215px;" width="6" height="6" viewBox="0 0 6 6"><path d="M6 0.500V6H0.500Z" fill="#222"/></svg>
<svg class="a" style="left:1202px;top:229px;" width="6" height="6" viewBox="0 0 6 6"><path d="M6 0.500V6H0.500Z" fill="#222"/></svg>
<svg class="a" style="left:1202.5px;top:211.5px;" width="10" height="11" viewBox="0 0 10 11"><rect x="0.600" y="0.600" width="8.800" height="9.800" rx="1" fill="#fbfcff" stroke="#4a6fb0" stroke-width="1"/><path d="M0.600 3.200H9.400" stroke="#4a6fb0" stroke-width="1"/><rect x="2" y="4.800" width="2" height="4.500" fill="#e99"/><rect x="5.500" y="4.800" width="2.300" height="4.500" fill="#9c9"/></svg>
<span class="a t" id="t77" style="top:211.00px;font-size:9px;line-height:14px;color:#2b2b2b;left:1214.5px;letter-spacing:0.049px;">cosine</span>
<svg class="a" style="left:1216px;top:224.5px;" width="13" height="13" viewBox="0 0 13 13"><rect x="0.500" y="3.500" width="8" height="9" fill="#fbfbf0" stroke="#777"/><path d="M2 6H7M2 8H6M2 10H5" stroke="#9a9a5a" stroke-width=".8"/><path d="M1.500 2V4M3.500 2V4M5.500 2V4" stroke="#334" stroke-width=".9"/><path d="M5 11L6 8L11 1.500L12.500 2.500L7.500 9.500Z" fill="#2a3a6a"/><path d="M10 2.500L12 0.500" stroke="#e74" stroke-width="1.400"/></svg>
<span class="a t" id="t78" style="top:224.70px;font-size:9px;line-height:14px;color:#2b2b2b;left:1230px;letter-spacing:0.159px;">Internal Code</span>
<svg class="a" style="left:1232px;top:239.3px;" width="10.5" height="11" viewBox="0 0 10.5 11"><rect x="0.600" y="0.600" width="9.300" height="9.800" rx="1.300" fill="#e9e9ee" stroke="#5a78b8" stroke-width="1.100"/><rect x="2" y="2" width="6.500" height="7" fill="#dcdce2"/></svg>
<span class="a t" id="t79" style="top:238.30px;font-size:9px;line-height:14px;color:#2b2b2b;left:1245.5px;letter-spacing:0.024px;">Code</span>
<div class="a" style="left:1373px;top:211px;width:5px;height:847px;background:#e4e4e4;"></div>
<div class="a" style="left:1378px;top:211px;width:13px;height:835px;background:#f0f0f0;"></div>
<div class="a" style="left:1374.5px;top:630px;width:1.5px;height:1.5px;background:#bdbdbd;"></div>
<div class="a" style="left:1375.5px;top:631px;width:1.5px;height:1px;background:#fafafa;"></div>
<div class="a" style="left:1374.5px;top:633px;width:1.5px;height:1.5px;background:#bdbdbd;"></div>
<div class="a" style="left:1375.5px;top:634px;width:1.5px;height:1px;background:#fafafa;"></div>
<div class="a" style="left:1374.5px;top:636px;width:1.5px;height:1.5px;background:#bdbdbd;"></div>
<div class="a" style="left:1375.5px;top:637px;width:1.5px;height:1px;background:#fafafa;"></div>
<div class="a" style="left:1391px;top:211px;width:492px;height:835px;background:#ffffff;"></div>
<div class="a" style="left:1391px;top:211px;width:491px;height:835px;overflow:hidden;"><span class="a ln" style="right:459px;top:0.10px;">1</span><span class="a cd" style="left:35.5px;top:0.10px;"><span class="cm">//</span></span><span class="a ln" style="right:459px;top:13.92px;">2</span><span class="a cd" style="left:35.5px;top:13.92px;"><span class="cm">// Scriptlet Example</span></span><span class="a ln" style="right:459px;top:27.73px;">3</span><span class="a cd" style="left:35.5px;top:27.73px;"><span class="cm">//</span></span><span class="a ln" style="right:459px;top:41.55px;">4</span><span class="a cd" style="left:35.5px;top:41.55px;"><span class="cm">// Scriptlets are special Artifacts that contain Javascript.</span></span><span class="a ln" style="right:459px;top:55.37px;">5</span><span class="a cd" style="left:35.5px;top:55.37px;"><span class="cm">// Each Scriptlet is executed before the diagram is displayed.</span></span><span class="a ln" style="right:459px;top:69.19px;">6</span><span class="a cd" style="left:35.5px;top:69.19px;"><span class="cm">// The order in which they are run is determined by the Z-order on the diagram</span></span><span class="a ln" style="right:459px;top:83.00px;">7</span><span class="a cd" style="left:35.5px;top:83.00px;"><span class="cm">// Each Scriptlet has access to two global objects in addition to the standard</span></span><span class="a ln" style="right:459px;top:96.82px;">8</span><span class="a cd" style="left:35.5px;top:96.82px;"><span class="cm">//</span></span><span class="a ln" style="right:459px;top:110.64px;">9</span><span class="a cd" style="left:35.5px;top:110.64px;"><span class="cm">// theDiagram - an automation Diagram interface to the diagram on which the</span></span><span class="a ln" style="right:459px;top:124.45px;">10</span><span class="a cd" style="left:35.5px;top:124.45px;"><span class="cm">// theElement - an automation Element interface to the Scriptlet element itself</span></span><span class="a ln" style="right:459px;top:138.27px;">11</span><span class="a cd" style="left:35.5px;top:138.27px;"><span class="cm">// theInstance - an automation Diagramobject interface to the Scriptlet element</span></span><span class="a ln" style="right:459px;top:152.09px;">12</span><span class="a cd" style="left:35.5px;top:152.09px;"><span class="cm">//</span></span><span class="a ln" style="right:459px;top:165.90px;">13</span><span class="a cd" style="left:35.5px;top:165.90px;"><span class="cm">// The cosine of an angle is the ratio of the adjacent side and hypotenuse side</span></span><span class="a ln" style="right:459px;top:179.72px;">14</span><span class="a cd" style="left:35.5px;top:179.72px;"><span class="cm">// cos 0 = adjacent / hypotenuse</span></span><span class="a ln" style="right:459px;top:193.54px;">15</span><span class="a cd" style="left:35.5px;top:193.54px;"><span class="cm">//</span></span><span class="a ln" style="right:459px;top:207.36px;">16</span><span class="a ln" style="right:459px;top:221.17px;">17</span><span class="a cd" style="left:35.5px;top:221.17px;"><span class="kw">function</span> Print(msg)</span><span class="a ln" style="right:459px;top:234.99px;">18</span><span class="a cd" style="left:35.5px;top:234.99px;">{</span><span class="a ln" style="right:459px;top:248.81px;">19</span><span class="a cd" style="left:35.5px;top:248.81px;">    Session.Output(msg);</span><span class="a ln" style="right:459px;top:262.62px;">20</span><span class="a cd" style="left:35.5px;top:262.62px;">}</span><span class="a ln" style="right:459px;top:276.44px;">21</span><span class="a ln" style="right:459px;top:290.26px;">22</span><span class="a cd" style="left:35.5px;top:290.26px;"><span class="kw">function</span> LogExecutingScriptlet()</span><span class="a ln" style="right:459px;top:304.07px;">23</span><span class="a cd" style="left:35.5px;top:304.07px;">{</span><span class="a ln" style="right:459px;top:317.89px;">24</span><span class="a cd" style="left:35.5px;top:317.89px;">    <span class="cm">// theScriptlet global provides access to the Scriptlet element on the diagram</span></span><span class="a ln" style="right:459px;top:331.71px;">25</span><span class="a cd" style="left:35.5px;top:331.71px;">    <span class="cm">// To get the IElement interface we use the IDiagramObject::GetElementByName</span></span><span class="a ln" style="right:459px;top:345.52px;">26</span><span class="a cd" style="left:35.5px;top:345.52px;">    <span class="kw">if</span>(theDiagram)</span><span class="a ln" style="right:459px;top:359.34px;">27</span><span class="a cd" style="left:35.5px;top:359.34px;">        Print(<span class="st">&quot;theDiagram exists for diagram &quot;</span> + theDiagram.Name);</span><span class="a ln" style="right:459px;top:373.16px;">28</span><span class="a cd" style="left:35.5px;top:373.16px;">    <span class="kw">else</span></span><span class="a ln" style="right:459px;top:386.98px;">29</span><span class="a cd" style="left:35.5px;top:386.98px;">        Print(<span class="st">&quot;theDiagram is &quot;</span> + <span class="kw">typeof</span>(theDiagram));</span><span class="a ln" style="right:459px;top:400.79px;">30</span><span class="a ln" style="right:459px;top:414.61px;">31</span><span class="a cd" style="left:35.5px;top:414.61px;">    <span class="kw">if</span>(theElement)</span><span class="a ln" style="right:459px;top:428.43px;">32</span><span class="a cd" style="left:35.5px;top:428.43px;">        Print(<span class="st">&quot;theElement exists for &quot;</span> + theElement.Name);</span><span class="a ln" style="right:459px;top:442.24px;">33</span><span class="a cd" style="left:35.5px;top:442.24px;">    <span class="kw">else</span></span><span class="a ln" style="right:459px;top:456.06px;">34</span><span class="a cd" style="left:35.5px;top:456.06px;">        Print(<span class="st">&quot;theElement is &quot;</span> + <span class="kw">typeof</span>(theElement));</span><span class="a ln" style="right:459px;top:469.88px;">35</span><span class="a ln" style="right:459px;top:483.70px;">36</span><span class="a cd" style="left:35.5px;top:483.70px;">    <span class="kw">if</span>(theInstance)</span><span class="a ln" style="right:459px;top:497.51px;">37</span><span class="a cd" style="left:35.5px;top:497.51px;">        Print(<span class="st">&quot;theInstance exists for &quot;</span> + theElement.Name);</span><span class="a ln" style="right:459px;top:511.33px;">38</span><span class="a cd" style="left:35.5px;top:511.33px;">    <span class="kw">else</span></span><span class="a ln" style="right:459px;top:525.15px;">39</span><span class="a cd" style="left:35.5px;top:525.15px;">        Print(<span class="st">&quot;theInstance is &quot;</span> + <span class="kw">typeof</span>(theElement));</span><span class="a ln" style="right:459px;top:538.96px;">40</span><span class="a cd" style="left:35.5px;top:538.96px;">}</span><span class="a ln" style="right:459px;top:552.78px;">41</span><span class="a ln" style="right:459px;top:566.60px;">42</span><span class="a cd" style="left:35.5px;top:566.60px;"><span class="kw">function</span> CalcAngle()</span><span class="a ln" style="right:459px;top:580.41px;">43</span><span class="a cd" style="left:35.5px;top:580.41px;">{</span><span class="a ln" style="right:459px;top:594.23px;">44</span><span class="a cd" style="left:35.5px;top:594.23px;">    <span class="kw">var</span> hypotenuse as EA.Element;</span><span class="a ln" style="right:459px;top:608.05px;">45</span><span class="a cd" style="left:35.5px;top:608.05px;">    <span class="kw">var</span> adjacent as EA.Element;</span><span class="a ln" style="right:459px;top:621.87px;">46</span><span class="a cd" style="left:35.5px;top:621.87px;">    <span class="kw">var</span> angle as EA.Element;</span><span class="a ln" style="right:459px;top:635.68px;">47</span><span class="a ln" style="right:459px;top:649.50px;">48</span><span class="a cd" style="left:35.5px;top:649.50px;">    <span class="cm">// Print something about this Scriptlet</span></span><span class="a ln" style="right:459px;top:663.32px;">49</span><span class="a cd" style="left:35.5px;top:663.32px;">    LogExecutingScriptlet();</span><span class="a ln" style="right:459px;top:677.13px;">50</span><span class="a ln" style="right:459px;top:690.95px;">51</span><span class="a cd" style="left:35.5px;top:690.95px;">    hypotenuse = theDiagram.GetElementByName(<span class="st">&quot;Hypotenuse&quot;</span>);</span><span class="a ln" style="right:459px;top:704.77px;">52</span><span class="a cd" style="left:35.5px;top:704.77px;">    adjacent = theDiagram.GetElementByName(<span class="st">&quot;Adjacent&quot;</span>);</span><span class="a ln" style="right:459px;top:718.58px;">53</span><span class="a cd" style="left:35.5px;top:718.58px;">    angle = theDiagram.GetElementByName(<span class="st">&quot;Angle&quot;</span>);</span><span class="a ln" style="right:459px;top:732.40px;">54</span><span class="a ln" style="right:459px;top:746.22px;">55</span><span class="a cd" style="left:35.5px;top:746.22px;">    <span class="kw">var</span> hyp = parseInt(hypotenuse.Notes);</span><span class="a ln" style="right:459px;top:760.04px;">56</span><span class="a cd" style="left:35.5px;top:760.04px;">    <span class="kw">var</span> adj = parseInt(adjacent.Notes);</span><span class="a ln" style="right:459px;top:773.85px;">57</span><span class="a cd" style="left:35.5px;top:773.85px;">    <span class="kw">var</span> z = cephes.cos( adj / hyp);</span><span class="a ln" style="right:459px;top:787.67px;">58</span><span class="a cd" style="left:35.5px;top:787.67px;">    Session.Output( <span class="st">&quot;cos 0 = adjacent (&quot;</span> + adj + <span class="st">&quot;) / hypotenuse (&quot;</span> + hyp + <span class="st">&quot;) = &quot;</span> + z);</span><span class="a ln" style="right:459px;top:801.49px;">59</span><span class="a cd" style="left:35.5px;top:801.49px;">    angle.Notes = z.toString();</span><span class="a ln" style="right:459px;top:815.30px;">60</span><span class="a cd" style="left:35.5px;top:815.30px;">    angle.Update();</span><span class="a ln" style="right:459px;top:829.12px;">61</span><span class="a cd" style="left:35.5px;top:829.12px;">}</span><div class="a" style="left:61.5px;top:359.3px;width:1px;height:14.0px;background:#dcdcdc;"></div><div class="a" style="left:61.5px;top:387.0px;width:1px;height:27.8px;background:#dcdcdc;"></div><div class="a" style="left:61.5px;top:428.4px;width:1px;height:14.0px;background:#dcdcdc;"></div><div class="a" style="left:61.5px;top:456.1px;width:1px;height:27.8px;background:#dcdcdc;"></div><div class="a" style="left:61.5px;top:497.5px;width:1px;height:14.0px;background:#dcdcdc;"></div><div class="a" style="left:61.5px;top:525.1px;width:1px;height:14.0px;background:#dcdcdc;"></div></div>
<div class="a" style="left:1883px;top:211px;width:11px;height:835px;background:#e8e8e8;"></div>
<div class="a" style="left:1882px;top:211px;width:1px;height:835px;background:#d6d6d6;"></div>
<div class="a" style="left:1883px;top:211px;width:11px;height:12px;background:#fdfdfd;border:1px solid #c6c6c6;box-sizing:border-box;border-radius:2px;"></div>
<svg class="a" style="left:1885.5px;top:215px;" width="6" height="4" viewBox="0 0 6 4"><path d="M0 4L3 0L6 4Z" fill="#333"/></svg>
<div class="a" style="left:1883px;top:223px;width:11px;height:394px;background:#fdfdfd;border:1px solid #d2d2d2;box-sizing:border-box;border-radius:1px;"></div>
<div class="a" style="left:1883px;top:1034px;width:11px;height:12px;background:#fdfdfd;border:1px solid #c6c6c6;box-sizing:border-box;border-radius:2px;"></div>
<svg class="a" style="left:1885.5px;top:1038px;" width="6" height="4" viewBox="0 0 6 4"><path d="M0 0L3 4L6 0Z" fill="#333"/></svg>
<div class="a" style="left:1378px;top:1046px;width:516px;height:12px;background:#e8e8e8;"></div>
<div class="a" style="left:1379px;top:1046px;width:12px;height:12px;background:#fdfdfd;border:1px solid #c6c6c6;box-sizing:border-box;border-radius:2px;"></div>
<svg class="a" style="left:1383px;top:1049px;" width="4" height="6" viewBox="0 0 4 6"><path d="M4 0L0 3L4 6Z" fill="#333"/></svg>
<div class="a" style="left:1391px;top:1046px;width:145px;height:12px;background:#fdfdfd;border:1px solid #d2d2d2;box-sizing:border-box;border-radius:1px;"></div>
<div class="a" style="left:1871px;top:1046px;width:12px;height:12px;background:#fdfdfd;border:1px solid #c6c6c6;box-sizing:border-box;border-radius:2px;"></div>
<svg class="a" style="left:1875px;top:1049px;" width="4" height="6" viewBox="0 0 4 6"><path d="M0 0L4 3L0 6Z" fill="#333"/></svg>
<div class="a" style="left:1894px;top:147px;width:26px;height:911px;background:#e7e7e7;"></div>
<div class="a" style="left:1912px;top:152px;width:5px;height:40px;background:#d5d5d5;"></div>
<span class="a t" style="left:1909px;top:153px;font-size:8.3px;line-height:12px;color:#2b2b2b;transform-origin:0 0;transform:rotate(90deg);">Properties</span>
<div class="a" style="left:1px;top:1058px;width:1919px;height:20px;background:#f0f0f0;"></div>
<div class="a" style="left:1px;top:1058px;width:1919px;height:1px;background:#e2e2e2;"></div>
<div class="a" style="left:0px;top:1078px;width:1920px;height:2px;background:#8a8a8a;"></div>
<div class="a" style="left:1918px;top:50px;width:2px;height:1030px;background:#e0e0e0;"></div>
<span class="a t" id="t80" style="top:1061.90px;font-size:9px;line-height:14px;color:#2b2b2b;left:4.5px;letter-spacing:0.198px;">InformationItem:Adjacent</span>
<span class="a t" id="t81" style="top:1061.90px;font-size:9px;line-height:14px;color:#2b2b2b;left:116px;letter-spacing:0.159px;">Left:</span>
<span class="a t" id="t82" style="top:1061.90px;font-size:9px;line-height:14px;color:#2b2b2b;left:142.7px;letter-spacing:0.014px;">290 x Top:</span>
<span class="a t" id="t83" style="top:1061.90px;font-size:9px;line-height:14px;color:#2b2b2b;left:192.7px;letter-spacing:-0.018px;">342 - Width:</span>
<span class="a t" id="t84" style="top:1061.90px;font-size:9px;line-height:14px;color:#2b2b2b;left:249.3px;letter-spacing:0.057px;">110 x Height:</span>
<span class="a t" id="t85" style="top:1061.90px;font-size:9px;line-height:14px;color:#2b2b2b;left:311px;letter-spacing:0.247px;">60</span>
<span class="a t" id="t86" style="top:1062.00px;font-size:9px;line-height:14px;color:#2b2b2b;left:1572px;letter-spacing:-0.045px;">All Perspectives</span>
<div class="a" style="left:1654px;top:1064px;width:1px;height:7px;background:#c8c8c8;"></div>
<div class="a" style="left:1672px;top:1068px;width:5px;height:1px;background:#555;"></div>
<div class="a" style="left:1684px;top:1063px;width:3px;height:10px;background:#7a7a7a;"></div>
<div class="a" style="left:1687px;top:1068px;width:65px;height:1px;background:#9a9a9a;"></div>
<svg class="a" style="left:1760px;top:1065px;" width="7" height="7" viewBox="0 0 7 7"><path d="M0 3.500H7M3.500 0V7" stroke="#555" stroke-width="1"/></svg>
<span class="a t" id="t87" style="top:1062.00px;font-size:8px;line-height:14px;color:#a8a8a8;left:1777.4px;letter-spacing:-0.178px;">CAP</span>
<span class="a t" id="t88" style="top:1062.00px;font-size:9px;line-height:14px;color:#2b2b2b;left:1807.8px;letter-spacing:0.003px;">NUM</span>
<span class="a t" id="t89" style="top:1062.00px;font-size:8px;line-height:14px;color:#a8a8a8;left:1843.3px;letter-spacing:-0.281px;">SCRL</span>
<span class="a t" id="t90" style="top:1062.00px;font-size:8.5px;line-height:14px;color:#a8a8a8;left:1878.6px;letter-spacing:-0.040px;">CLOUD</span>
<!-- p5_dialog -->
<div class="a" style="left:504px;top:569px;width:656px;height:434px;background:#f0f0f0;box-shadow:1px 3px 12px 3px rgba(0,0,0,.36);border:1px solid #2f5d92;box-sizing:border-box;"></div>
<div class="a" style="left:505px;top:570px;width:654px;height:15px;background:#577ca6;"></div>
<div class="a" style="left:505px;top:585px;width:654px;height:1px;background:#2f5d92;"></div>
<div class="a" style="left:505px;top:586px;width:654px;height:1px;background:#fdfdfd;"></div>
<span class="a t" id="t91" style="top:572.10px;font-size:9px;line-height:14px;color:#fff;left:509px;letter-spacing:0.240px;">InformationItem : Adjacent</span>
<svg class="a" style="left:1146px;top:572px;" width="7.5" height="7.5" viewBox="0 0 7.5 7.5"><path d="M0.700 0.700L6.800 6.800M6.800 0.700L0.700 6.800" stroke="#fff" stroke-width="1.500"/></svg>
<div class="a" style="left:508px;top:587px;width:112px;height:383px;background:#fdfdfd;border-right:1px solid #dadada;"></div>
<div class="a" style="left:508px;top:602.5px;width:112px;height:12.3px;background:#f0f0f0;"></div>
<svg class="a" style="left:516px;top:591.5px;" width="6" height="6" viewBox="0 0 6 6"><path d="M6 0.500V6H0.500Z" fill="#222"/></svg>
<span class="a t" id="t92" style="top:588.00px;font-size:9px;line-height:14px;color:#2b2b2b;left:528.8px;letter-spacing:0.208px;">Properties</span>
<span class="a t" id="t93" style="top:601.81px;font-size:9px;line-height:14px;color:#2b2b2b;left:548px;letter-spacing:0.026px;">General</span>
<svg class="a" style="left:516px;top:619.12px;" width="6" height="6" viewBox="0 0 6 6"><path d="M6 0.500V6H0.500Z" fill="#222"/></svg>
<span class="a t" id="t94" style="top:615.62px;font-size:9px;line-height:14px;color:#2b2b2b;left:528.8px;letter-spacing:0.049px;">Responsibilities</span>
<span class="a t" id="t95" style="top:629.43px;font-size:9px;line-height:14px;color:#2b2b2b;left:548px;letter-spacing:0.090px;">Requirements</span>
<span class="a t" id="t96" style="top:643.24px;font-size:9px;line-height:14px;color:#2b2b2b;left:548px;letter-spacing:0.144px;">Constraints</span>
<span class="a t" id="t97" style="top:657.05px;font-size:9px;line-height:14px;color:#2b2b2b;left:548px;letter-spacing:-0.058px;">Scenarios</span>
<span class="a t" id="t98" style="top:670.86px;font-size:9px;line-height:14px;color:#2b2b2b;left:548px;letter-spacing:-0.081px;">Files</span>
<svg class="a" style="left:516px;top:688.17px;" width="6" height="6" viewBox="0 0 6 6"><path d="M6 0.500V6H0.500Z" fill="#222"/></svg>
<span class="a t" id="t99" style="top:684.67px;font-size:9px;line-height:14px;color:#2b2b2b;left:528.8px;letter-spacing:-0.074px;">Related</span>
<span class="a t" id="t100" style="top:698.48px;font-size:9px;line-height:14px;color:#2b2b2b;left:548px;letter-spacing:0.159px;">Links</span>
<span class="a t" id="t101" style="top:589.30px;font-size:9px;line-height:14px;color:#2b2b2b;left:629.3px;letter-spacing:-0.301px;">Name:</span>
<div class="a" style="left:629px;top:603px;width:302px;height:46px;background:#fdfdfd;border:1px solid #7d7d7d;box-sizing:border-box;border-radius:1px;"></div>
<span class="a t" id="t102" style="top:602.60px;font-size:9px;line-height:14px;color:#2b2b2b;left:632px;letter-spacing:0.260px;">Adjacent</span>
<div class="a" style="left:669.5px;top:604.5px;width:1px;height:10px;background:#000;"></div>
<div class="a" style="left:629px;top:654px;width:302px;height:311px;background:#ffffff;border:1px solid #dcdcdc;box-sizing:border-box;"></div>
<div class="a" style="left:630px;top:655px;width:300px;height:18px;background:#f0f0f0;"></div>
<span class="a t" id="t103" style="top:656.00px;font-size:13px;line-height:16px;color:#2a3358;left:636px;font-weight:bold;font-family:'Liberation Serif', serif;">B</span>
<span class="a t" id="t104" style="top:656.00px;font-size:13px;line-height:16px;color:#2a3358;left:653.5px;font-family:'Liberation Serif', serif;font-style:italic;">I</span>
<span class="a t" id="t105" style="top:656.00px;font-size:13px;line-height:16px;color:#2a3358;left:668px;font-family:'Liberation Serif', serif;text-decoration:underline;">U</span>
<svg class="a" style="left:685px;top:657px;" width="14" height="14" viewBox="0 0 14 14"><path d="M1 8L4 1L7 8M2.200 5.500H5.800" fill="none" stroke="#222" stroke-width="1.200"/><rect x="6.500" y="0.500" width="2.300" height="2.300" fill="#e33"/><rect x="9" y="0.500" width="2.300" height="2.300" fill="#f5a623"/><rect x="6.500" y="3" width="2.300" height="2.300" fill="#39f"/><rect x="1" y="10" width="12.500" height="3" fill="#000"/></svg>
<svg class="a" style="left:702px;top:663.5px;" width="5" height="2.5" viewBox="0 0 5 2.5"><path d="M0 0H5L2.5 2.5Z" fill="#333"/></svg>
<div class="a" style="left:711px;top:657px;width:1px;height:15px;background:#dadada;"></div>
<svg class="a" style="left:718px;top:658.5px;" width="12" height="12" viewBox="0 0 12 12"><circle cx="1.300" cy="1.800" r="1.200" fill="#223"/><circle cx="1.300" cy="6" r="1.200" fill="#223"/><circle cx="1.300" cy="10.200" r="1.200" fill="#223"/><path d="M4 1.800H12M4 6H12M4 10.200H12" stroke="#556" stroke-width="1.100"/></svg>
<svg class="a" style="left:734px;top:658px;" width="13" height="13" viewBox="0 0 13 13"><path d="M4.500 2.200H13M4.500 6.500H13M4.500 10.800H13" stroke="#556" stroke-width="1.100"/><path d="M1 0.500V3.500M0.300 5H2L0.300 8H2M0.300 9.500H2V12.500H0.300M0.500 11H2" stroke="#223" stroke-width=".8" fill="none"/></svg>
<div class="a" style="left:751px;top:657px;width:1px;height:15px;background:#dadada;"></div>
<svg class="a" style="left:759px;top:658px;" width="12" height="12" viewBox="0 0 12 12"><path d="M1.500 5.800L6.500 10.800M6.500 5.800L1.500 10.800" stroke="#223" stroke-width="1.300"/><path d="M8.500 1.200Q10.500 0 10.500 1.800Q10.500 3 8.500 4.500H11" stroke="#c22" stroke-width=".9" fill="none"/></svg>
<svg class="a" style="left:776px;top:658px;" width="12" height="13" viewBox="0 0 12 13"><path d="M1.500 1.500L6.500 6.500M6.500 1.500L1.500 6.500" stroke="#223" stroke-width="1.300"/><path d="M8.500 8.200Q10.500 7 10.500 8.800Q10.500 10 8.500 11.500H11" stroke="#22c" stroke-width=".9" fill="none"/></svg>
<svg class="a" style="left:790px;top:657px;" width="15" height="15" viewBox="0 0 15 15"><circle cx="6.500" cy="6.500" r="5.800" fill="#2a5ab0"/><path d="M3 3Q6 1 8 3.500Q6 6 7.500 8.500Q5 10 3.500 8Q1.500 6 3 3Z" fill="#3a9a4a"/><path d="M6.500 10.500A2 2 0 1 0 10.500 10.500A2 2 0 1 0 14 10.500" fill="none" stroke="#c8921a" stroke-width="1.600"/><path d="M6.500 12.500H14" stroke="#c8921a" stroke-width="1.600"/></svg>
<div class="a" style="left:809px;top:657px;width:1px;height:15px;background:#dadada;"></div>
<svg class="a" style="left:815px;top:657.5px;" width="11" height="13" viewBox="0 0 11 13"><path d="M0.600 0.600H7L10 3.500V12.400H0.600Z" fill="#fff" stroke="#2a4ac0" stroke-width="1.200"/><path d="M4 12L9.500 6.500V12Z" fill="#d33"/></svg>
<span class="a t" id="t106" style="top:685.50px;font-size:9px;line-height:14px;color:#111;left:644px;font-weight:bold;letter-spacing:0.397px;">14</span>
<div class="a" style="left:936px;top:603px;width:214px;height:344px;background:#f0f0f0;border:1px solid #c2c2c2;box-sizing:border-box;box-shadow:inset 1px 1px 0 #fbfbfb,1px 1px 0 #fbfbfb;"></div>
<span class="a t" id="t107" style="top:620.50px;font-size:9px;line-height:14px;color:#2b2b2b;left:949.4px;letter-spacing:-0.111px;">Stereotype:</span>
<span class="a t" id="t108" style="top:642.70px;font-size:9px;line-height:14px;color:#2b2b2b;left:949.4px;letter-spacing:-0.029px;">Status:</span>
<span class="a t" id="t109" style="top:665.40px;font-size:9px;line-height:14px;color:#2b2b2b;left:949.4px;letter-spacing:0.132px;">Alias:</span>
<span class="a t" id="t110" style="top:687.60px;font-size:9px;line-height:14px;color:#2b2b2b;left:949.4px;letter-spacing:-0.358px;">Keywords:</span>
<span class="a t" id="t111" style="top:710.00px;font-size:9px;line-height:14px;color:#2b2b2b;left:949.4px;letter-spacing:0.068px;">Author:</span>
<span class="a t" id="t112" style="top:734.00px;font-size:9px;line-height:14px;color:#2b2b2b;left:949.4px;letter-spacing:-0.146px;">Complexity:</span>
<span class="a t" id="t113" style="top:757.70px;font-size:9px;line-height:14px;color:#2b2b2b;left:949.4px;letter-spacing:-0.337px;">Language:</span>
<span class="a t" id="t114" style="top:780.00px;font-size:9px;line-height:14px;color:#2b2b2b;left:949.4px;letter-spacing:-0.028px;">Version:</span>
<span class="a t" id="t115" style="top:802.00px;font-size:9px;line-height:14px;color:#2b2b2b;left:949.4px;letter-spacing:-0.370px;">Phase:</span>
<div class="a" style="left:1005px;top:621px;width:118px;height:15px;background:#ececec;border:1px solid #d0d0d0;box-sizing:border-box;border-radius:1px;"></div>
<div class="a" style="left:1125px;top:621px;width:14px;height:15px;background:#fdfdfd;border:1px solid #b8b8b8;box-sizing:border-box;border-radius:1px;"></div>
<span class="a t" id="t116" style="top:622.50px;font-size:9px;line-height:14px;color:#555;left:1128.5px;">...</span>
<div class="a" style="left:1005px;top:643.5px;width:134px;height:15.5px;background:#fdfdfd;border:1px solid #c4c4c4;box-sizing:border-box;border-radius:1px;"></div>
<span class="a t" id="t117" style="top:644.60px;font-size:9px;line-height:14px;color:#2b2b2b;left:1008px;letter-spacing:-0.428px;">Proposed</span>
<svg class="a" style="left:1128.5px;top:650.5px;" width="5" height="2.5" viewBox="0 0 5 2.5"><path d="M0 0H5L2.5 2.5Z" fill="#222"/></svg>
<div class="a" style="left:1005px;top:665.5px;width:134px;height:15px;background:#fdfdfd;border:1px solid #c4c4c4;box-sizing:border-box;border-radius:1px;"></div>
<div class="a" style="left:1005px;top:688px;width:134px;height:14.5px;background:#fdfdfd;border:1px solid #c4c4c4;box-sizing:border-box;border-radius:1px;"></div>
<div class="a" style="left:1005px;top:711px;width:104px;height:15.5px;background:#fdfdfd;border:1px solid #c4c4c4;box-sizing:border-box;border-radius:1px;"></div>
<span class="a t" id="t118" style="top:711.70px;font-size:9px;line-height:14px;color:#2b2b2b;left:1009.5px;letter-spacing:0.035px;">shebbard</span>
<svg class="a" style="left:1098.5px;top:717.5px;" width="5" height="2.5" viewBox="0 0 5 2.5"><path d="M0 0H5L2.5 2.5Z" fill="#222"/></svg>
<div class="a" style="left:1005px;top:734px;width:104px;height:15.5px;background:#fdfdfd;border:1px solid #c4c4c4;box-sizing:border-box;border-radius:1px;"></div>
<span class="a t" id="t119" style="top:735.00px;font-size:9px;line-height:14px;color:#2b2b2b;left:1008px;letter-spacing:-0.426px;">Easy</span>
<svg class="a" style="left:1098.5px;top:741px;" width="5" height="2.5" viewBox="0 0 5 2.5"><path d="M0 0H5L2.5 2.5Z" fill="#222"/></svg>
<div class="a" style="left:1005px;top:758px;width:104px;height:15.5px;background:#fdfdfd;border:1px solid #c4c4c4;box-sizing:border-box;border-radius:1px;"></div>
<span class="a t" id="t120" style="top:758.80px;font-size:9px;line-height:14px;color:#2b2b2b;left:1008px;letter-spacing:-0.301px;">Java</span>
<svg class="a" style="left:1098.5px;top:764.5px;" width="5" height="2.5" viewBox="0 0 5 2.5"><path d="M0 0H5L2.5 2.5Z" fill="#222"/></svg>
<div class="a" style="left:1005px;top:780.5px;width:55.5px;height:15px;background:#fdfdfd;border:1px solid #c4c4c4;box-sizing:border-box;border-radius:1px;"></div>
<span class="a t" id="t121" style="top:780.40px;font-size:9px;line-height:14px;color:#2b2b2b;left:1008.3px;letter-spacing:-0.069px;">1.0</span>
<div class="a" style="left:1005px;top:803px;width:55.5px;height:15px;background:#fdfdfd;border:1px solid #c4c4c4;box-sizing:border-box;border-radius:1px;"></div>
<span class="a t" id="t122" style="top:802.60px;font-size:9px;line-height:14px;color:#2b2b2b;left:1008.3px;letter-spacing:-0.069px;">1.0</span>
<span class="a t" id="t123" style="top:865.50px;font-size:9px;line-height:14px;color:#2b2b2b;left:949.5px;letter-spacing:-0.378px;">Package:</span>
<span class="a t" id="t124" style="top:887.40px;font-size:9px;line-height:14px;color:#2b2b2b;left:949.5px;letter-spacing:-0.090px;">Created:</span>
<span class="a t" id="t125" style="top:909.60px;font-size:9px;line-height:14px;color:#2b2b2b;left:949.5px;letter-spacing:-0.036px;">Modified:</span>
<div class="a" style="left:1005px;top:865.5px;width:134px;height:15px;background:#f0f0f0;border:1px solid #d4d4d4;box-sizing:border-box;border-radius:1px;"></div>
<span class="a t" id="t126" style="top:865.80px;font-size:9px;line-height:14px;color:#2b2b2b;left:1009.5px;letter-spacing:-0.026px;">Geometry</span>
<div class="a" style="left:1005px;top:887.5px;width:104px;height:15px;background:#f4f4f4;border:1px solid #d4d4d4;box-sizing:border-box;border-radius:1px;"></div>
<span class="a t" id="t127" style="top:888.00px;font-size:9px;line-height:14px;color:#2b2b2b;left:1010px;letter-spacing:-0.322px;">15/09/2021 3:53:42 PM</span>
<div class="a" style="left:1005px;top:910.5px;width:104px;height:15px;background:#f4f4f4;border:1px solid #d4d4d4;box-sizing:border-box;border-radius:1px;"></div>
<span class="a t" id="t128" style="top:911.00px;font-size:9px;line-height:14px;color:#2b2b2b;left:1010px;letter-spacing:-0.322px;">15/09/2021 4:03:07 PM</span>
<div class="a" style="left:936px;top:947px;width:214px;height:16px;background:#e6e6e6;"></div>
<div class="a" style="left:936px;top:946px;width:29px;height:17px;background:#fdfdfd;border:1px solid #d0d0d0;border-top:none;box-sizing:border-box;"></div>
<span class="a t" id="t129" style="top:947.30px;font-size:9px;line-height:14px;color:#2b2b2b;left:940.6px;letter-spacing:0.199px;">Main</span>
<span class="a t" id="t130" style="top:948.00px;font-size:9px;line-height:14px;color:#2b2b2b;left:970.3px;letter-spacing:-0.028px;">Advanced</span>
<span class="a t" id="t131" style="top:948.00px;font-size:9px;line-height:14px;color:#2b2b2b;left:1019.6px;letter-spacing:0.074px;">Tags</span>
<div class="a" style="left:508px;top:970px;width:648px;height:1px;background:#dcdcdc;"></div>
<div class="a" style="left:911px;top:976px;width:58px;height:20px;background:#fdfdfd;border:1px solid #3f5f8a;box-sizing:border-box;border-radius:1px;"></div><span class="a t" id="t132" style="top:979.30px;font-size:9px;line-height:14px;color:#2b2b2b;left:934.25px;letter-spacing:-0.353px;">OK</span>
<div class="a" style="left:973px;top:976px;width:57.5px;height:20px;background:#fdfdfd;border:1px solid #adadad;box-sizing:border-box;border-radius:1px;"></div><span class="a t" id="t133" style="top:979.30px;font-size:9px;line-height:14px;color:#2b2b2b;left:989.0px;letter-spacing:-0.284px;">Cancel</span>
<div class="a" style="left:1034px;top:976px;width:57.5px;height:20px;background:#fdfdfd;border:1px solid #adadad;box-sizing:border-box;border-radius:1px;"></div><span class="a t" id="t134" style="top:979.30px;font-size:9px;line-height:14px;color:#a0a0a0;left:1052.0px;letter-spacing:-0.044px;"><u>A</u>pply</span>
<div class="a" style="left:1095px;top:976px;width:58px;height:20px;background:#fdfdfd;border:1px solid #adadad;box-sizing:border-box;border-radius:1px;"></div><span class="a t" id="t135" style="top:979.30px;font-size:9px;line-height:14px;color:#2b2b2b;left:1115.25px;letter-spacing:-0.051px;">Help</span>
<svg class="a" style="left:996.5px;top:672.8px;" width="16" height="24" viewBox="0 0 16 24"><path d="M1.700 2.300V20.200L5.500 16.500L8.200 21.900L10.700 20.600L8 15.100L13.300 14.900Z" fill="#fff" stroke="#fff" stroke-width="3" stroke-linejoin="round" opacity=".85"/><path d="M1.700 2.300V20.200L5.500 16.500L8.200 21.900L10.700 20.600L8 15.100L13.300 14.900Z" fill="#fff" stroke="#0a0a0a" stroke-width="1.300" stroke-linejoin="miter"/></svg>
</body></html>
